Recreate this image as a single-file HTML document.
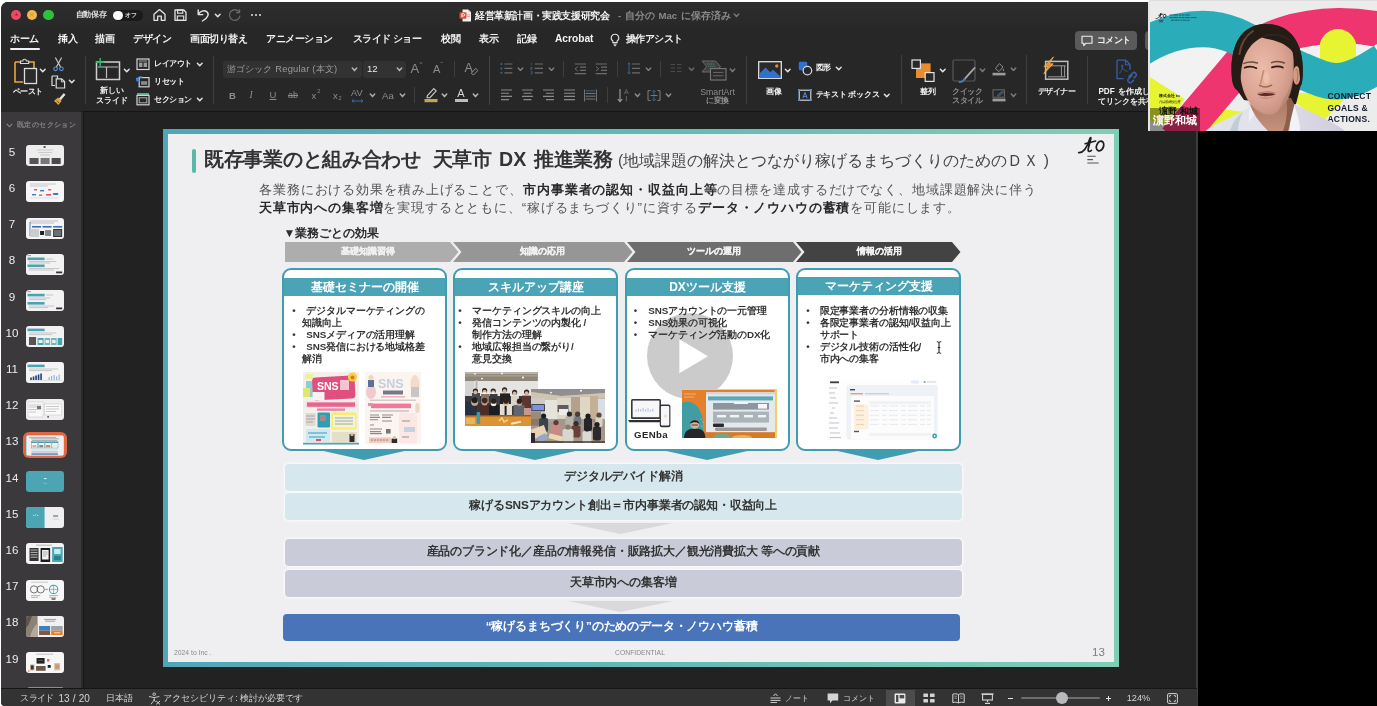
<!DOCTYPE html>
<html lang="ja">
<head>
<meta charset="utf-8">
<title>PowerPoint</title>
<style>
*{margin:0;padding:0;box-sizing:border-box;}
html,body{width:1377px;height:706px;overflow:hidden;background:#fff;}
body{font-family:"Liberation Sans",sans-serif;position:relative;color:#fff;}
.abs{position:absolute;}
.t{position:absolute;white-space:nowrap;line-height:1;z-index:2;}
.b{font-weight:bold;}
#win{position:absolute;left:1px;top:2px;width:1196px;height:704px;background:#272727;border-radius:7px 0 0 4px;overflow:hidden;}
#black{position:absolute;left:1197px;top:0;width:180px;height:706px;background:#000;}
/* inside #win coordinates are offset by (-1,-2); use #root for page coords */
#root{position:absolute;left:0;top:0;width:1377px;height:706px;will-change:transform;}
.sep{position:absolute;width:1px;background:#3e3e3e;}
.chev{position:absolute;width:6px;height:4px;}
.dim{color:#8e8e90;}
/*SIDEBAR*/
#side{position:absolute;left:1px;top:112px;width:79.5px;height:576px;background:#3b393c;}
.num{position:absolute;left:0;width:24px;text-align:center;font-size:11px;color:#ececec;line-height:1;}
.th{position:absolute;left:26px;width:38px;height:21px;background:#f3f3f4;border-radius:3px;overflow:hidden;}
/*SLIDE*/
#slide{position:absolute;left:163px;top:129px;width:956px;height:538px;background:linear-gradient(90deg,#4fa6b6 0%,#62b9b6 50%,#7fceb6 100%);}
#sin{position:absolute;left:5px;top:5px;right:5px;bottom:5px;background:#efeef0;}
.k{color:#333;}
</style>
</head>
<body>
<div id="root">
<div id="black"></div>
<div id="win"><div style="position:absolute;left:0;top:0;width:100%;height:27px;background:linear-gradient(#2d2d2d,#2a2a2a 70%,#272727);"></div></div>

<!--CHROME-->
<div class="abs" style="left:10.8px;top:9.5px;width:10.6px;height:10.6px;border-radius:50%;background:#ec4a63;"></div><div class="abs" style="left:26.8px;top:9.5px;width:10.6px;height:10.6px;border-radius:50%;background:#f5b650;"></div><div class="abs" style="left:43.1px;top:9.5px;width:10.6px;height:10.6px;border-radius:50%;background:#2bc23f;"></div><svg class="abs" style="left:13.6px;top:12.4px;" width="5" height="5" viewBox="0 0 5 5"><polygon points="2.5,0.9 4.1,3.6 0.9,3.6" fill="#9a1d3f"/></svg><svg class="abs" style="left:29.4px;top:12.2px;" width="5.4" height="5.4" viewBox="0 0 5.4 5.4"><path d="M1 1 L4.4 4.4 M4.4 1 L1 4.4" stroke="#d8741c" stroke-width="0.9" stroke-dasharray="0.9 0.5"/></svg><div class="t b" style="left:75.6px;top:11.1px;font-size:7.8px;color:#e0e0e0;letter-spacing:-0.2px;">自動保存</div><div class="abs" style="left:112.5px;top:9.8px;width:30px;height:10.8px;border-radius:5.4px;background:#1a1a1c;"></div><div class="abs" style="left:113.3px;top:10.5px;width:9.4px;height:9.4px;border-radius:50%;background:#fafafa;"></div><div class="t b" style="left:125px;top:12.2px;font-size:6.2px;color:#d8d8d8;">オフ</div><svg class="abs" style="left:152px;top:8px;" width="15" height="14" viewBox="0 0 15 14"><path d="M2 6.2 L7.5 1.6 L13 6.2 V12.3 H9.3 V8.2 H5.7 V12.3 H2 Z" fill="none" stroke="#e4e4e4" stroke-width="1.3" stroke-linejoin="round"/></svg><svg class="abs" style="left:173px;top:8px;" width="15" height="14" viewBox="0 0 15 14"><path d="M2 2 H10.8 L13 4.2 V12.3 H2 Z" fill="none" stroke="#e4e4e4" stroke-width="1.3" stroke-linejoin="round"/><rect x="4.6" y="2" width="5.2" height="3.2" fill="none" stroke="#e4e4e4" stroke-width="1.1"/><rect x="4.3" y="8" width="6.4" height="4.3" fill="none" stroke="#e4e4e4" stroke-width="1.1"/></svg><svg class="abs" style="left:196px;top:8px;" width="15" height="15" viewBox="0 0 15 15"><path d="M2.2 2 V6.6 H6.8" fill="none" stroke="#e4e4e4" stroke-width="1.4" stroke-linecap="round" stroke-linejoin="round"/><path d="M2.6 6.3 C4 3.2 8 1.8 10.6 3.6 C13.4 5.6 12.6 9.4 6.4 13" fill="none" stroke="#e4e4e4" stroke-width="1.4" stroke-linecap="round"/></svg><svg class="abs" style="left:213.75px;top:12.7px;" width="7.5" height="5" viewBox="-1 -1 7.5 5"><polyline points="0.4,0.2 2.75,2.8 5.1,0.2" fill="none" stroke="#e0e0e0" stroke-width="1.5" stroke-linecap="round" stroke-linejoin="round"/></svg><svg class="abs" style="left:227px;top:8px;" width="15" height="15" viewBox="0 0 15 15"><path d="M12.2 4.2 A5.3 5.3 0 1 0 12.9 8.2" fill="none" stroke="#666668" stroke-width="1.3" stroke-linecap="round"/><path d="M12.6 1.6 V4.6 H9.6" fill="none" stroke="#666668" stroke-width="1.3" stroke-linecap="round" stroke-linejoin="round"/></svg><div class="abs" style="left:251px;top:14.3px;width:2px;height:2px;border-radius:50%;background:#e0e0e0;"></div><div class="abs" style="left:255px;top:14.3px;width:2px;height:2px;border-radius:50%;background:#e0e0e0;"></div><div class="abs" style="left:259px;top:14.3px;width:2px;height:2px;border-radius:50%;background:#e0e0e0;"></div><svg class="abs" style="left:459px;top:8.5px;" width="13" height="13" viewBox="0 0 13 13"><path d="M3.5 0.5 H9.2 L12 3.3 V12.5 H3.5 Z" fill="#f4f0ee"/><path d="M9.2 0.5 V3.3 H12 Z" fill="#d6cfcc"/><rect x="0.5" y="3.2" width="7" height="6.6" rx="1" fill="#d4513a"/><path d="M2.9 8.3 V4.7 H4.5 A1.15 1.15 0 0 1 4.5 7 H2.9" fill="none" stroke="#fff" stroke-width="0.9"/><rect x="8.3" y="5.4" width="2.6" height="0.9" fill="#e08a7a"/><rect x="8.3" y="7.2" width="2.6" height="0.9" fill="#e08a7a"/></svg><div class="t b" style="left:475px;top:10.7px;font-size:9.6px;color:#f4f4f4;letter-spacing:-0.4px;">経営革新計画・実践支援研究会</div><div class="t b" style="left:618px;top:10.7px;font-size:9.6px;color:#8a8a8c;word-spacing:1px;">- 自分の Mac に保存済み</div><svg class="abs" style="left:732.5px;top:13.2px;" width="7" height="4.8" viewBox="-1 -1 7 4.8"><polyline points="0.3,0.1 2.5,2.6 4.7,0.1" fill="none" stroke="#77777a" stroke-width="1.5" stroke-linecap="round" stroke-linejoin="round"/></svg><div class="t b" style="left:10px;top:34.4px;font-size:9.6px;color:#f2f2f2;letter-spacing:-0.45px;">ホーム</div><div class="t b" style="left:58px;top:34.4px;font-size:9.6px;color:#f2f2f2;letter-spacing:-0.45px;">挿入</div><div class="t b" style="left:95.4px;top:34.4px;font-size:9.6px;color:#f2f2f2;letter-spacing:-0.45px;">描画</div><div class="t b" style="left:133px;top:34.4px;font-size:9.6px;color:#f2f2f2;letter-spacing:-0.45px;">デザイン</div><div class="t b" style="left:190px;top:34.4px;font-size:9.6px;color:#f2f2f2;letter-spacing:-0.45px;">画面切り替え</div><div class="t b" style="left:266px;top:34.4px;font-size:9.6px;color:#f2f2f2;letter-spacing:-0.45px;">アニメーション</div><div class="t b" style="left:352.5px;top:34.4px;font-size:9.6px;color:#f2f2f2;letter-spacing:-0.45px;">スライド ショー</div><div class="t b" style="left:441px;top:34.4px;font-size:9.6px;color:#f2f2f2;letter-spacing:-0.45px;">校閲</div><div class="t b" style="left:479px;top:34.4px;font-size:9.6px;color:#f2f2f2;letter-spacing:-0.45px;">表示</div><div class="t b" style="left:517px;top:34.4px;font-size:9.6px;color:#f2f2f2;letter-spacing:-0.45px;">記録</div><div class="t b" style="left:555px;top:34.1px;font-size:10.2px;color:#f2f2f2;">Acrobat</div><svg class="abs" style="left:608.5px;top:32.5px;" width="12" height="14" viewBox="0 0 12 14"><path d="M6 1.2 A3.7 3.7 0 0 0 3.9 8 V9.6 H8.1 V8 A3.7 3.7 0 0 0 6 1.2 Z" fill="none" stroke="#e0e0e0" stroke-width="1.1"/><path d="M4.4 11.2 H7.6 M4.9 12.7 H7.1" stroke="#e0e0e0" stroke-width="1"/></svg><div class="t b" style="left:625.5px;top:34.4px;font-size:9.6px;color:#f2f2f2;letter-spacing:-0.45px;">操作アシスト</div><div class="abs" style="left:10px;top:47.8px;width:29.6px;height:2.5px;border-radius:1.3px;background:#f2f2f2;"></div><div class="abs" style="left:1075px;top:31px;width:62px;height:19.2px;border-radius:4px;background:#5a5a5a;"></div><svg class="abs" style="left:1081px;top:34.5px;" width="12" height="12" viewBox="0 0 12 12"><path d="M1 1.2 H11 V8.2 H5 L2.8 10.6 V8.2 H1 Z" fill="none" stroke="#f0f0f0" stroke-width="1.1" stroke-linejoin="round"/></svg><div class="t b" style="left:1096.7px;top:36.1px;font-size:8.6px;color:#f4f4f4;letter-spacing:-0.5px;">コメント</div><div class="abs" style="left:1145.3px;top:31px;width:40px;height:19.2px;border-radius:4px;background:#5a5a5a;"></div>
<!--RIBBON-->
<svg class="abs" style="left:13px;top:57px;" width="26" height="28" viewBox="0 0 26 28"><path d="M2 5 H8 M16 5 H21 V11" fill="none" stroke="#e9a540" stroke-width="1.6"/><path d="M2 5 V25 H10" fill="none" stroke="#e9a540" stroke-width="1.6"/><path d="M7.5 6.5 V4 H9.8 A1.8 1.8 0 0 1 13.4 4 H15.7 V6.5 Z" fill="none" stroke="#d8d8d8" stroke-width="1.1"/><rect x="11.5" y="11.5" width="12" height="15" fill="#2b2b2d" stroke="#dcdcdc" stroke-width="1.3"/></svg><svg class="abs" style="left:38.75px;top:68.0px;" width="7.5" height="5" viewBox="-1 -1 7.5 5"><polyline points="0.4,0.2 2.75,2.8 5.1,0.2" fill="none" stroke="#e0e0e0" stroke-width="1.5" stroke-linecap="round" stroke-linejoin="round"/></svg><div class="t b" style="left:2.5px;width:50px;text-align:center;top:87.9px;font-size:8px;color:#f2f2f2;letter-spacing:-0.5px;">ペースト</div><svg class="abs" style="left:52px;top:57px;" width="13" height="15" viewBox="0 0 13 15"><path d="M3.6 1 L8.6 10 M9.4 1 L4.4 10" stroke="#c8c8c8" stroke-width="1.2" stroke-linecap="round"/><circle cx="3.6" cy="11.8" r="1.8" fill="none" stroke="#4a8fe0" stroke-width="1.2"/><circle cx="9.4" cy="11.8" r="1.8" fill="none" stroke="#4a8fe0" stroke-width="1.2"/></svg><svg class="abs" style="left:50.5px;top:74.5px;" width="16" height="14" viewBox="0 0 16 14"><path d="M1 1 H6.5 V3.5 M1 1 V10.5 H4" fill="none" stroke="#dcdcdc" stroke-width="1.2"/><path d="M5.2 3.8 H10.6 L13.6 6.6 V13 H5.2 Z" fill="none" stroke="#dcdcdc" stroke-width="1.2"/><path d="M10.4 4 V6.8 H13.4" fill="none" stroke="#dcdcdc" stroke-width="1"/></svg><svg class="abs" style="left:68.25px;top:79.0px;" width="7.5" height="5" viewBox="-1 -1 7.5 5"><polyline points="0.4,0.2 2.75,2.8 5.1,0.2" fill="none" stroke="#e0e0e0" stroke-width="1.5" stroke-linecap="round" stroke-linejoin="round"/></svg><svg class="abs" style="left:52px;top:92px;" width="14" height="14" viewBox="0 0 14 14"><path d="M7.2 6.8 L11.8 1.6 L13 2.8 L8.6 8" fill="#e8e8e8" stroke="#e8e8e8" stroke-width="0.8"/><path d="M2 9 L6 5.4 L9.6 9 L6.2 13 Z" fill="#eaa63f"/><path d="M3.2 10 L5.4 12.4 M4.8 8.6 L7 11" stroke="#2a2a2c" stroke-width="0.7"/></svg><div class="sep" style="left:85px;top:56px;height:48px;background:#3e3e3e;"></div><svg class="abs" style="left:94px;top:57px;" width="28" height="25" viewBox="0 0 28 25"><rect x="2.5" y="5" width="23" height="17.5" fill="none" stroke="#cfcfcf" stroke-width="1.5"/><path d="M4 10 H24 M12.5 10 V21" stroke="#bdbdbd" stroke-width="1.2"/><path d="M6.2 1 V9.4 M2 5.2 H10.4" stroke="#37b26a" stroke-width="1.5"/></svg><svg class="abs" style="left:123.25px;top:68.0px;" width="7.5" height="5" viewBox="-1 -1 7.5 5"><polyline points="0.4,0.2 2.75,2.8 5.1,0.2" fill="none" stroke="#e0e0e0" stroke-width="1.5" stroke-linecap="round" stroke-linejoin="round"/></svg><div class="t b" style="left:86.5px;width:50px;text-align:center;top:87.4px;font-size:8px;color:#f2f2f2;">新しい</div><div class="t b" style="left:86.5px;width:50px;text-align:center;top:97.2px;font-size:8px;color:#f2f2f2;">スライド</div><svg class="abs" style="left:135.5px;top:57.5px;" width="14" height="13" viewBox="0 0 14 13"><rect x="1" y="1" width="12" height="10.5" fill="none" stroke="#d4d4d4" stroke-width="1.2"/><rect x="3" y="4.6" width="3.4" height="4.4" fill="#9a9a9a"/><rect x="7.6" y="4.6" width="3.4" height="4.4" fill="#9a9a9a"/><rect x="3" y="2.5" width="8" height="1" fill="#9a9a9a"/></svg><div class="t b" style="left:154px;top:60.2px;font-size:8px;color:#f2f2f2;letter-spacing:-0.5px;">レイアウト</div><svg class="abs" style="left:196.25px;top:62.0px;" width="7.5" height="5" viewBox="-1 -1 7.5 5"><polyline points="0.4,0.2 2.75,2.8 5.1,0.2" fill="none" stroke="#e0e0e0" stroke-width="1.5" stroke-linecap="round" stroke-linejoin="round"/></svg><svg class="abs" style="left:135.5px;top:74.5px;" width="14" height="13" viewBox="0 0 14 13"><rect x="3.2" y="2.6" width="9.8" height="9.2" fill="none" stroke="#d4d4d4" stroke-width="1.2"/><rect x="5" y="6.2" width="6.2" height="3.6" fill="#8a8a8a"/><path d="M1 5.6 A3.6 3.6 0 0 1 6.4 2.4" fill="none" stroke="#3f8fe6" stroke-width="1.3"/><path d="M0.4 2.8 L1.1 5.9 L4 5.2" fill="none" stroke="#3f8fe6" stroke-width="1.1"/></svg><div class="t b" style="left:154px;top:77.8px;font-size:8px;color:#f2f2f2;letter-spacing:-0.5px;">リセット</div><svg class="abs" style="left:135.5px;top:92px;" width="14" height="14" viewBox="0 0 14 14"><rect x="1" y="1" width="12" height="2.4" fill="#4fae86"/><rect x="1" y="3.4" width="12" height="9.4" fill="none" stroke="#d4d4d4" stroke-width="1.2"/><rect x="3.2" y="5.8" width="7.6" height="5" fill="none" stroke="#b0b0b0" stroke-width="1"/></svg><div class="t b" style="left:154px;top:95.5px;font-size:8px;color:#f2f2f2;letter-spacing:-0.5px;">セクション</div><svg class="abs" style="left:196.25px;top:97.1px;" width="7.5" height="5" viewBox="-1 -1 7.5 5"><polyline points="0.4,0.2 2.75,2.8 5.1,0.2" fill="none" stroke="#e0e0e0" stroke-width="1.5" stroke-linecap="round" stroke-linejoin="round"/></svg><div class="sep" style="left:213px;top:56px;height:48px;background:#3e3e3e;"></div><div class="abs" style="left:222.5px;top:60.5px;width:139px;height:17.5px;border-radius:3px;background:#323232;"></div><div class="abs" style="left:362.5px;top:60.5px;width:43px;height:17.5px;border-radius:3px;background:#323232;"></div><div class="t" style="left:226.5px;top:64.3px;font-size:9.4px;color:#9a9a9c;letter-spacing:0.2px;">游ゴシック Regular (本文)</div><svg class="abs" style="left:351.0px;top:67.1px;" width="7" height="4.8" viewBox="-1 -1 7 4.8"><polyline points="0.3,0.1 2.5,2.6 4.7,0.1" fill="none" stroke="#b4b4b4" stroke-width="1.5" stroke-linecap="round" stroke-linejoin="round"/></svg><div class="t" style="left:367px;top:64.2px;font-size:9.6px;color:#e8e8e8;">12</div><svg class="abs" style="left:396.0px;top:67.1px;" width="7" height="4.8" viewBox="-1 -1 7 4.8"><polyline points="0.3,0.1 2.5,2.6 4.7,0.1" fill="none" stroke="#b4b4b4" stroke-width="1.5" stroke-linecap="round" stroke-linejoin="round"/></svg><div class="t" style="left:410.5px;top:62.0px;font-size:13px;color:#8c8c8f;">A</div><div class="t" style="left:419.5px;top:60.5px;font-size:6px;color:#8c8c8f;">^</div><div class="t" style="left:433px;top:63.8px;font-size:11px;color:#8c8c8f;">A</div><div class="t" style="left:440.5px;top:60.5px;font-size:7px;color:#8c8c8f;">ˇ</div><div class="sep" style="left:454px;top:61px;height:16px;background:#3e3e3e;"></div><div class="t" style="left:464.5px;top:62.2px;font-size:12.5px;color:#8c8c8f;">A</div><svg class="abs" style="left:470px;top:67px;" width="9" height="9" viewBox="0 0 9 9"><path d="M1.2 6.4 L5.6 1.4 L7.8 3.4 L3.6 8 Z" fill="none" stroke="#8c8c8f" stroke-width="1"/></svg><div class="t b" style="left:229px;top:90.5px;font-size:9.5px;color:#8c8c8f;">B</div><div class="t" style="left:249.5px;top:90.5px;font-size:9.5px;color:#8c8c8f;font-style:italic;font-family:'Liberation Serif',serif;">I</div><div class="t" style="left:269.5px;top:90.2px;font-size:9.5px;color:#8c8c8f;text-decoration:underline;">U</div><div class="t" style="left:288px;top:90.7px;font-size:9px;color:#8c8c8f;text-decoration:line-through;">ab</div><div class="t" style="left:311.5px;top:91.0px;font-size:9.5px;color:#8c8c8f;">x</div><div class="t" style="left:317.2px;top:89.0px;font-size:5.5px;color:#8c8c8f;">2</div><div class="t" style="left:333px;top:90.5px;font-size:9.5px;color:#8c8c8f;">x</div><div class="t" style="left:338.6px;top:96.0px;font-size:5.5px;color:#8c8c8f;">2</div><div class="t" style="left:351px;top:88.8px;font-size:9.2px;color:#8c8c8f;">AV</div><svg class="abs" style="left:351px;top:98.8px;" width="13" height="4" viewBox="0 0 13 4"><path d="M1 2 H12 M2.8 0.4 L1 2 L2.8 3.6 M10.2 0.4 L12 2 L10.2 3.6" fill="none" stroke="#3d6fb0" stroke-width="0.9"/></svg><svg class="abs" style="left:368.5px;top:93.19999999999999px;" width="7" height="4.8" viewBox="-1 -1 7 4.8"><polyline points="0.3,0.1 2.5,2.6 4.7,0.1" fill="none" stroke="#a8a8a8" stroke-width="1.5" stroke-linecap="round" stroke-linejoin="round"/></svg><div class="t" style="left:382px;top:90.6px;font-size:9.6px;color:#8c8c8f;">Aa</div><svg class="abs" style="left:399.0px;top:93.19999999999999px;" width="7" height="4.8" viewBox="-1 -1 7 4.8"><polyline points="0.3,0.1 2.5,2.6 4.7,0.1" fill="none" stroke="#a8a8a8" stroke-width="1.5" stroke-linecap="round" stroke-linejoin="round"/></svg><div class="sep" style="left:414px;top:87px;height:16px;background:#3e3e3e;"></div><svg class="abs" style="left:424px;top:87px;" width="14" height="16" viewBox="0 0 14 16"><path d="M3.4 8.6 L9.8 1.6 L12.2 3.8 L6 10.6 L3 10.8 Z" fill="none" stroke="#cfcfcf" stroke-width="1.1" stroke-linejoin="round"/><rect x="0.5" y="12" width="13" height="3.2" fill="#bda655"/></svg><svg class="abs" style="left:441.0px;top:93.19999999999999px;" width="7" height="4.8" viewBox="-1 -1 7 4.8"><polyline points="0.3,0.1 2.5,2.6 4.7,0.1" fill="none" stroke="#b8b8b8" stroke-width="1.5" stroke-linecap="round" stroke-linejoin="round"/></svg><div class="t" style="left:457.3px;top:87.7px;font-size:11px;color:#d4d4d4;">A</div><div class="abs" style="left:454.5px;top:99.2px;width:13px;height:3.2px;background:#bdbdbd;"></div><svg class="abs" style="left:471.5px;top:93.19999999999999px;" width="7" height="4.8" viewBox="-1 -1 7 4.8"><polyline points="0.3,0.1 2.5,2.6 4.7,0.1" fill="none" stroke="#b8b8b8" stroke-width="1.5" stroke-linecap="round" stroke-linejoin="round"/></svg><div class="sep" style="left:488.5px;top:55.5px;height:49.5px;background:#444444;"></div><svg class="abs" style="left:500px;top:62px;" width="13" height="13" viewBox="0 0 13 13"><circle cx="1.4" cy="2" r="1" fill="#3d6696"/><circle cx="1.4" cy="6.4" r="1" fill="#3d6696"/><circle cx="1.4" cy="10.8" r="1" fill="#3d6696"/><path d="M4.4 2 H12.4 M4.4 6.4 H12.4 M4.4 10.8 H12.4" stroke="#6c6c6f" stroke-width="1.2"/></svg><svg class="abs" style="left:517.2px;top:66.6px;" width="7" height="4.8" viewBox="-1 -1 7 4.8"><polyline points="0.3,0.1 2.5,2.6 4.7,0.1" fill="none" stroke="#7a7a7c" stroke-width="1.5" stroke-linecap="round" stroke-linejoin="round"/></svg><svg class="abs" style="left:530px;top:62px;" width="14" height="13" viewBox="0 0 14 13"><path d="M4.8 2 H13 M4.8 6.4 H13 M4.8 10.8 H13" stroke="#6c6c6f" stroke-width="1.2"/><path d="M1.4 0.8 V3.2 M0.6 5.4 H2.2 V6.4 H0.6 V7.6 H2.2 M0.6 9.6 H2.2 V12 H0.6 M0.8 10.8 H2.2" fill="none" stroke="#3d6696" stroke-width="0.7"/></svg><svg class="abs" style="left:547.5px;top:66.6px;" width="7" height="4.8" viewBox="-1 -1 7 4.8"><polyline points="0.3,0.1 2.5,2.6 4.7,0.1" fill="none" stroke="#7a7a7c" stroke-width="1.5" stroke-linecap="round" stroke-linejoin="round"/></svg><div class="sep" style="left:563px;top:61px;height:16px;background:#3e3e3e;"></div><svg class="abs" style="left:574px;top:62.5px;" width="13" height="12" viewBox="0 0 13 12"><path d="M0.6 1 H12 M6 4.2 H12 M6 7.4 H12 M0.6 10.6 H12" stroke="#6c6c6f" stroke-width="1.2"/><path d="M3.8 3.6 L1 5.8 L3.8 8" fill="none" stroke="#6c6c6f" stroke-width="1"/></svg><svg class="abs" style="left:594.5px;top:62.5px;" width="13" height="12" viewBox="0 0 13 12"><path d="M0.6 1 H12 M6 4.2 H12 M6 7.4 H12 M0.6 10.6 H12" stroke="#6c6c6f" stroke-width="1.2"/><path d="M1 3.6 L3.8 5.8 L1 8" fill="none" stroke="#6c6c6f" stroke-width="1"/></svg><div class="sep" style="left:616.5px;top:61px;height:16px;background:#3e3e3e;"></div><svg class="abs" style="left:627px;top:62px;" width="14" height="13" viewBox="0 0 14 13"><path d="M5 2 H13 M5 6.4 H13 M5 10.8 H13" stroke="#6c6c6f" stroke-width="1.2"/><path d="M2 0.8 V12 M0.6 2.4 L2 0.8 L3.4 2.4 M0.6 10.4 L2 12 L3.4 10.4" fill="none" stroke="#3d6696" stroke-width="0.9"/></svg><svg class="abs" style="left:644.5px;top:66.6px;" width="7" height="4.8" viewBox="-1 -1 7 4.8"><polyline points="0.3,0.1 2.5,2.6 4.7,0.1" fill="none" stroke="#7a7a7c" stroke-width="1.5" stroke-linecap="round" stroke-linejoin="round"/></svg><div class="sep" style="left:659.5px;top:61px;height:16px;background:#3e3e3e;"></div><svg class="abs" style="left:670px;top:63px;" width="12" height="11" viewBox="0 0 12 11"><path d="M0.5 1.5 H5 M0.5 5 H5 M0.5 8.5 H5 M7 1.5 H11.5 M7 5 H11.5 M7 8.5 H11.5" stroke="#4a4a52" stroke-width="1.2"/></svg><svg class="abs" style="left:687.5px;top:66.6px;" width="7" height="4.8" viewBox="-1 -1 7 4.8"><polyline points="0.3,0.1 2.5,2.6 4.7,0.1" fill="none" stroke="#68686a" stroke-width="1.5" stroke-linecap="round" stroke-linejoin="round"/></svg><svg class="abs" style="left:501px;top:89px;" width="12" height="12" viewBox="0 0 12 12"><path d="M0 1 H11 M0 4.2 H8 M0 7.4 H11 M0 10.6 H8" stroke="#8a8a8c" stroke-width="1.1"/></svg><svg class="abs" style="left:522px;top:89px;" width="12" height="12" viewBox="0 0 12 12"><path d="M0 1 H11 M1.5 4.2 H9.5 M0 7.4 H11 M1.5 10.6 H9.5" stroke="#8a8a8c" stroke-width="1.1"/></svg><svg class="abs" style="left:543px;top:89px;" width="12" height="12" viewBox="0 0 12 12"><path d="M0 1 H11 M3 4.2 H11 M0 7.4 H11 M3 10.6 H11" stroke="#8a8a8c" stroke-width="1.1"/></svg><svg class="abs" style="left:563.5px;top:89px;" width="12" height="12" viewBox="0 0 12 12"><path d="M0 1 H11 M0 4.2 H11 M0 7.4 H11 M0 10.6 H11" stroke="#8a8a8c" stroke-width="1.1"/></svg><svg class="abs" style="left:583.5px;top:88.5px;" width="13" height="13" viewBox="0 0 13 13"><path d="M1.5 4.4 H11.5 M1.5 7.2 H11.5 M1.5 10 H11.5" stroke="#7a7a7c" stroke-width="1"/><path d="M0.5 0.5 V12.5 M12.5 0.5 V12.5" stroke="#7a7a7c" stroke-width="0.9"/><path d="M1.6 1.8 H11.4" stroke="#3d6696" stroke-width="0.9"/></svg><div class="sep" style="left:606.5px;top:87px;height:16px;background:#3e3e3e;"></div><svg class="abs" style="left:617px;top:88px;" width="13" height="15" viewBox="0 0 13 15"><path d="M3 1 V13.4 M0.8 11 L3 13.6 L5.2 11" fill="none" stroke="#a0a0a2" stroke-width="1.1"/><path d="M7.4 6 L9.4 1.4 L11.4 6 M8 4.6 H10.8" fill="none" stroke="#6a6a6c" stroke-width="0.8"/><path d="M9.4 8 V13.4" stroke="#6a6a6c" stroke-width="0.9"/></svg><svg class="abs" style="left:633.5px;top:93.19999999999999px;" width="7" height="4.8" viewBox="-1 -1 7 4.8"><polyline points="0.3,0.1 2.5,2.6 4.7,0.1" fill="none" stroke="#8a8a8c" stroke-width="1.5" stroke-linecap="round" stroke-linejoin="round"/></svg><svg class="abs" style="left:646.5px;top:88.5px;" width="14" height="13" viewBox="0 0 14 13"><path d="M3.6 1.6 H1 V11.4 H3.6 M10.4 1.6 H13 V11.4 H10.4" fill="none" stroke="#7a8088" stroke-width="1"/><path d="M7 1.4 V11.6 M5.4 3 L7 1.2 L8.6 3 M5.4 10 L7 11.8 L8.6 10" fill="none" stroke="#3d6696" stroke-width="0.9"/><path d="M3.6 6.5 H10.4" stroke="#7a8088" stroke-width="0.9"/></svg><svg class="abs" style="left:664.5px;top:93.19999999999999px;" width="7" height="4.8" viewBox="-1 -1 7 4.8"><polyline points="0.3,0.1 2.5,2.6 4.7,0.1" fill="none" stroke="#8a8a8c" stroke-width="1.5" stroke-linecap="round" stroke-linejoin="round"/></svg><svg class="abs" style="left:700.5px;top:59.5px;" width="26" height="21" viewBox="0 0 26 21"><path d="M1 1 H14.5 L19.5 6.5 L14.5 12 H1 L5.6 6.5 Z" fill="#414143" stroke="#6a6a6c" stroke-width="1"/><path d="M6 4 H13 M7.4 6.4 H14.2" stroke="#3f7d57" stroke-width="1.3" stroke-dasharray="1.2 0.8"/><rect x="9.5" y="8.6" width="15.5" height="11.4" fill="#2b2b2d" stroke="#7a7a7c" stroke-width="1.1"/><path d="M12 12.4 H22.4 M12 15.8 H22.4" stroke="#6a6a6c" stroke-width="1"/></svg><svg class="abs" style="left:728.5px;top:68.1px;" width="7" height="4.8" viewBox="-1 -1 7 4.8"><polyline points="0.3,0.1 2.5,2.6 4.7,0.1" fill="none" stroke="#7a7a7c" stroke-width="1.5" stroke-linecap="round" stroke-linejoin="round"/></svg><div class="t" style="left:687.5px;width:60px;text-align:center;top:87.5px;font-size:8.8px;color:#8c8c8f;">SmartArt</div><div class="t b" style="left:687.5px;width:60px;text-align:center;top:97.4px;font-size:8px;color:#8c8c8f;letter-spacing:-0.5px;">に変換</div><div class="sep" style="left:746px;top:56px;height:48px;background:#3e3e3e;"></div><svg class="abs" style="left:757.5px;top:60.5px;" width="24" height="18" viewBox="0 0 24 18"><rect x="0.7" y="0.7" width="22.6" height="16.6" fill="#2a2a2c" stroke="#e0e0e0" stroke-width="1.3"/><path d="M1.4 16.6 V12.6 L7.6 6.6 L12.2 11.2 L15 8.8 L22.6 15.4 V16.6 Z" fill="#2f72cc"/><circle cx="18.8" cy="5" r="1.7" fill="#e8843c"/></svg><svg class="abs" style="left:784.25px;top:68.0px;" width="7.5" height="5" viewBox="-1 -1 7.5 5"><polyline points="0.4,0.2 2.75,2.8 5.1,0.2" fill="none" stroke="#e0e0e0" stroke-width="1.5" stroke-linecap="round" stroke-linejoin="round"/></svg><div class="t b" style="left:753.5px;width:40px;text-align:center;top:87.9px;font-size:8px;color:#f2f2f2;letter-spacing:-0.5px;">画像</div><svg class="abs" style="left:797.5px;top:60.5px;" width="15" height="15" viewBox="0 0 15 15"><rect x="0.8" y="0.8" width="8.4" height="8.4" rx="1.2" fill="#2f72cc"/><circle cx="9.4" cy="9.6" r="4.3" fill="#29292b" stroke="#d8d8d8" stroke-width="1.2"/></svg><div class="t b" style="left:815.7px;top:64.3px;font-size:8px;color:#f2f2f2;letter-spacing:-0.5px;">図形</div><svg class="abs" style="left:834.95px;top:66.3px;" width="7.5" height="5" viewBox="-1 -1 7.5 5"><polyline points="0.4,0.2 2.75,2.8 5.1,0.2" fill="none" stroke="#e0e0e0" stroke-width="1.5" stroke-linecap="round" stroke-linejoin="round"/></svg><svg class="abs" style="left:797.5px;top:88.5px;" width="14" height="12.5" viewBox="0 0 14 12.5"><rect x="1.2" y="1.2" width="11.6" height="10" fill="none" stroke="#e0e0e0" stroke-width="1.1"/><rect x="0" y="0" width="2.2" height="2.2" fill="#4a90e2"/><rect x="11.8" y="0" width="2.2" height="2.2" fill="#4a90e2"/><rect x="0" y="10.2" width="2.2" height="2.2" fill="#4a90e2"/><rect x="11.8" y="10.2" width="2.2" height="2.2" fill="#4a90e2"/><path d="M4.8 9.2 L7 3.4 L9.2 9.2 M5.6 7.4 H8.4" fill="none" stroke="#4a90e2" stroke-width="1"/></svg><div class="t b" style="left:815.7px;top:90.6px;font-size:8px;color:#f2f2f2;letter-spacing:-0.3px;">テキスト ボックス</div><svg class="abs" style="left:883.25px;top:92.5px;" width="7.5" height="5" viewBox="-1 -1 7.5 5"><polyline points="0.4,0.2 2.75,2.8 5.1,0.2" fill="none" stroke="#e0e0e0" stroke-width="1.5" stroke-linecap="round" stroke-linejoin="round"/></svg><div class="sep" style="left:900.5px;top:55px;height:49px;background:#3e3e3e;"></div><svg class="abs" style="left:910.5px;top:58.5px;" width="25" height="24" viewBox="0 0 25 24"><rect x="5" y="4.4" width="14.6" height="14.6" fill="#ea8b2d"/><rect x="1" y="1" width="8.4" height="8.4" fill="#29292b" stroke="#e4e4e4" stroke-width="1.2"/><rect x="14.2" y="13.6" width="8.8" height="8.8" fill="#29292b" stroke="#e4e4e4" stroke-width="1.2"/></svg><svg class="abs" style="left:938.75px;top:68.0px;" width="7.5" height="5" viewBox="-1 -1 7.5 5"><polyline points="0.4,0.2 2.75,2.8 5.1,0.2" fill="none" stroke="#e0e0e0" stroke-width="1.5" stroke-linecap="round" stroke-linejoin="round"/></svg><div class="t b" style="left:907.5px;width:40px;text-align:center;top:87.9px;font-size:8px;color:#f2f2f2;letter-spacing:-0.5px;">整列</div><svg class="abs" style="left:951.5px;top:58.5px;" width="26" height="25" viewBox="0 0 26 25"><rect x="1" y="1" width="22" height="21" rx="1.5" fill="none" stroke="#58585a" stroke-width="1.2"/><path d="M22.6 9 C19 13 15 17.4 12.4 20.4" stroke="#a8a8aa" stroke-width="1.8" stroke-linecap="round"/><path d="M12.4 20 C11 22.4 9.4 23.4 7.4 23" stroke="#4a78b8" stroke-width="1.8" stroke-linecap="round" fill="none"/></svg><svg class="abs" style="left:979.0px;top:68.1px;" width="7" height="4.8" viewBox="-1 -1 7 4.8"><polyline points="0.3,0.1 2.5,2.6 4.7,0.1" fill="none" stroke="#7a7a7c" stroke-width="1.5" stroke-linecap="round" stroke-linejoin="round"/></svg><div class="t b" style="left:942.0px;width:50px;text-align:center;top:87.9px;font-size:8px;color:#8c8c8f;letter-spacing:-0.5px;">クイック</div><div class="t b" style="left:942.0px;width:50px;text-align:center;top:97.4px;font-size:8px;color:#8c8c8f;letter-spacing:-0.5px;">スタイル</div><svg class="abs" style="left:991.5px;top:61.5px;" width="14" height="14" viewBox="0 0 14 14"><path d="M3.4 6.6 L7.4 1.6 L11 5 L7 9.6 Z" fill="none" stroke="#8a8a8c" stroke-width="1"/><path d="M11.4 6.6 C12.4 8 12.4 8.8 11.4 9.2 C10.4 8.8 10.4 8 11.4 6.6" fill="#8a8a8c"/><rect x="0.5" y="10.8" width="13" height="2.6" fill="#9c9c9e"/></svg><svg class="abs" style="left:1009.5px;top:66.6px;" width="7" height="4.8" viewBox="-1 -1 7 4.8"><polyline points="0.3,0.1 2.5,2.6 4.7,0.1" fill="none" stroke="#7a7a7c" stroke-width="1.5" stroke-linecap="round" stroke-linejoin="round"/></svg><svg class="abs" style="left:991.5px;top:88.5px;" width="14" height="13" viewBox="0 0 14 13"><rect x="1" y="0.8" width="11.4" height="7.4" fill="none" stroke="#6a6a6c" stroke-width="1"/><path d="M5 6.4 L10.4 1.8 L11.8 3.2 L6.6 7.6 Z" fill="#3e4a5c" stroke="#4c6488" stroke-width="0.7"/><rect x="0.5" y="9.6" width="13" height="2.8" fill="#9c9c9e"/></svg><svg class="abs" style="left:1009.5px;top:93.19999999999999px;" width="7" height="4.8" viewBox="-1 -1 7 4.8"><polyline points="0.3,0.1 2.5,2.6 4.7,0.1" fill="none" stroke="#7a7a7c" stroke-width="1.5" stroke-linecap="round" stroke-linejoin="round"/></svg><div class="sep" style="left:1026px;top:55px;height:49px;background:#3e3e3e;"></div><svg class="abs" style="left:1042px;top:56px;" width="28" height="25" viewBox="0 0 28 25"><rect x="3.6" y="5.4" width="22.2" height="17.8" fill="#272727" stroke="#bdbdbd" stroke-width="1.5"/><path d="M6 9.8 H23.6 M19.4 9.8 V20.6 M6 20.8 H23.6 M22.6 9.8 V20.6" fill="none" stroke="#9a9a9a" stroke-width="1"/><path d="M11.6 0.8 L2 10.6 H6 L1.8 17.8 L11.2 7.8 H7.2 Z" fill="#ee8a2a" stroke="#f7c766" stroke-width="0.7" stroke-linejoin="round"/></svg><div class="t b" style="left:1026.7px;width:60px;text-align:center;top:88.2px;font-size:8px;color:#f2f2f2;letter-spacing:-0.5px;">デザイナー</div><div class="sep" style="left:1086.5px;top:56px;height:48px;background:#3e3e3e;"></div><svg class="abs" style="left:1115px;top:59px;" width="23" height="25" viewBox="0 0 23 25"><path d="M2 1.2 H10.6 L15 5.6 V11 M2 1.2 V19.6 H8.6" fill="none" stroke="#3a5f9f" stroke-width="1.3"/><path d="M10.4 1.4 V5.8 H14.8" fill="none" stroke="#3a5f9f" stroke-width="1.1"/><path d="M4.4 14.4 C6.4 12.4 8 8.8 7.6 6.4 C7.4 5.4 6.4 5.6 6.6 7 C7 9.6 10 12 12.4 12.4" fill="none" stroke="#3a5f9f" stroke-width="0.9"/><path d="M14 17.6 L17.4 14.2 A2.2 2.2 0 0 1 20.6 17.4 L19 19 M17 16.4 L13.6 19.8 A2.2 2.2 0 0 0 16.8 23 L18.4 21.4" fill="none" stroke="#3a5f9f" stroke-width="1.5" stroke-linecap="round"/></svg><div class="t b" style="left:1098.4px;top:88.1px;font-size:8.2px;color:#f2f2f2;word-spacing:0.5px;">PDF を作成し</div><div class="t b" style="left:1097.7px;top:97.8px;font-size:8px;color:#f2f2f2;">てリンクを共有</div>
<!--CANVAS-->
<div class="abs" style="left:80px;top:111px;width:1117px;height:577px;background:#222222;"></div>
<div class="abs" style="left:80.5px;top:112px;width:2.6px;height:576px;background:#2a292b;"></div>
<div class="abs" style="left:83px;top:111px;width:1114px;height:1.2px;background:#151515;"></div><div class="abs" style="left:83px;top:111px;width:1px;height:577px;background:#161616;"></div>

<div class="abs" style="left:1196.4px;top:131px;width:1.2px;height:575px;background:#3c3c3c;"></div>
<!--SIDEBAR-->
<div id="side"></div>

<!--THUMBS-->
<svg class="abs" style="left:6px;top:122.5px;" width="7" height="5" viewBox="0 0 7 5"><polyline points="0.8,0.8 3.5,3.8 6.2,0.8" fill="none" stroke="#8a8a8c" stroke-width="1.1"/></svg><div class="t b" style="left:17px;top:121px;font-size:7.4px;color:#828285;letter-spacing:0.05px;letter-spacing:0.4px;">既定のセクション</div><div class="num" style="top:145.7px;font-size:11.6px;">5</div><svg class="abs" style="left:26.3px;top:145.2px;border-radius:3.2px;" width="38.2" height="21" viewBox="0 0 38 21" preserveAspectRatio="none"><rect width="38" height="21" fill="#ededee"/><path d="M11 5 H27 M12 7.5 H26 M14 10 H24" stroke="#bbb" stroke-width="0.7"/><rect x="3.5" y="13" width="9" height="6" fill="#555"/><rect x="14.5" y="13" width="9" height="6" fill="#777"/><rect x="25.5" y="13" width="9" height="6" fill="#4a4a4a"/><rect x="17.5" y="1.2" width="2" height="1.6" fill="#333"/></svg>
<div class="num" style="top:181.9px;font-size:11.6px;">6</div><svg class="abs" style="left:26.3px;top:181.4px;border-radius:3.2px;" width="38.2" height="21" viewBox="0 0 38 21" preserveAspectRatio="none"><rect width="38" height="21" fill="#f6f6f7"/><path d="M4 3 H30 M4 5 H22" stroke="#aab" stroke-width="0.6"/><rect x="8" y="8" width="3" height="1.4" fill="#d55"/><rect x="14" y="9" width="4" height="1.4" fill="#47b"/><rect x="22" y="8" width="3" height="1.4" fill="#d55"/><rect x="6" y="13" width="4" height="1.4" fill="#47b"/><rect x="13" y="13.5" width="3" height="1.4" fill="#d55"/><rect x="20" y="13" width="5" height="1.6" fill="#d55"/><rect x="27" y="12" width="5" height="2" fill="#47b"/><path d="M4 17 H33" stroke="#ccd" stroke-width="0.6"/></svg>
<div class="num" style="top:218.1px;font-size:11.6px;">7</div><svg class="abs" style="left:26.3px;top:217.6px;border-radius:3.2px;" width="38.2" height="21" viewBox="0 0 38 21" preserveAspectRatio="none"><rect width="38" height="21" fill="#f4f4f5"/><path d="M4 3 H32 M4 5 H28" stroke="#99a" stroke-width="0.6"/><path d="M4 4 V18" stroke="#36a" stroke-width="0.8"/><rect x="6" y="8" width="9" height="1.6" fill="#3a6fb5"/><rect x="16.5" y="8" width="9" height="1.6" fill="#3a6fb5"/><rect x="27" y="8" width="9" height="1.6" fill="#3a6fb5"/><rect x="4" y="11" width="9" height="8" fill="#ccc"/><rect x="14" y="13" width="4" height="4" fill="#222"/><rect x="19" y="12" width="6" height="6" fill="#888"/><rect x="27" y="11" width="9" height="8" fill="#333"/><path d="M28 13 H35 M28 15 H35 M28 17 H35" stroke="#ddd" stroke-width="0.7"/></svg>
<div class="num" style="top:254.3px;font-size:11.6px;">8</div><svg class="abs" style="left:26.3px;top:253.8px;border-radius:3.2px;" width="38.2" height="21" viewBox="0 0 38 21" preserveAspectRatio="none"><rect width="38" height="21" fill="#f2f2f3"/><rect x="1.5" y="3.5" width="17" height="2.6" fill="#4aa3b2"/><rect x="1.5" y="10.5" width="17" height="2.6" fill="#4aa3b2"/><path d="M3 7.5 H30 M3 9 H24 M3 14.5 H33 M3 16 H28 M20 5 H27" stroke="#aaa" stroke-width="0.6"/><rect x="30" y="17.5" width="6" height="1.8" fill="#333"/><path d="M1.5 1.6 H5" stroke="#666" stroke-width="0.6"/></svg>
<div class="num" style="top:290.5px;font-size:11.6px;">9</div><svg class="abs" style="left:26.3px;top:290.0px;border-radius:3.2px;" width="38.2" height="21" viewBox="0 0 38 21" preserveAspectRatio="none"><rect width="38" height="21" fill="#f2f2f3"/><rect x="1.5" y="3.8" width="17" height="2.6" fill="#4aa3b2"/><rect x="1.5" y="12" width="17" height="2.6" fill="#4aa3b2"/><path d="M3 8 H24 M3 9.6 H20 M3 16 H28 M3 17.6 H22 M20 5 H27" stroke="#aaa" stroke-width="0.6"/><rect x="30" y="17.5" width="6" height="1.8" fill="#333"/><path d="M1.5 1.6 H5" stroke="#666" stroke-width="0.6"/></svg>
<div class="num" style="top:326.7px;font-size:11.6px;">10</div><svg class="abs" style="left:26.3px;top:326.2px;border-radius:3.2px;" width="38.2" height="21" viewBox="0 0 38 21" preserveAspectRatio="none"><rect width="38" height="21" fill="#f2f2f3"/><rect x="1.5" y="2.6" width="17" height="2.6" fill="#4aa3b2"/><path d="M3 7 H30 M3 8.6 H26" stroke="#aaa" stroke-width="0.6"/><rect x="3" y="11" width="7" height="8" fill="#555"/><rect x="11.5" y="12" width="6" height="7" fill="#4aa3b2"/><rect x="18.5" y="12" width="5.5" height="7" fill="#6bb"/><rect x="25" y="12" width="5.5" height="7" fill="#6bb"/><rect x="31.5" y="12" width="4.5" height="7" fill="#4aa3b2"/><rect x="12.5" y="14" width="4" height="3" fill="#eee"/><rect x="19.5" y="14" width="3.5" height="3" fill="#eee"/><rect x="26" y="14" width="3.5" height="3" fill="#eee"/></svg>
<div class="num" style="top:362.9px;font-size:11.6px;">11</div><svg class="abs" style="left:26.3px;top:362.4px;border-radius:3.2px;" width="38.2" height="21" viewBox="0 0 38 21" preserveAspectRatio="none"><rect width="38" height="21" fill="#f4f4f5"/><rect x="1.5" y="2.6" width="17" height="2.6" fill="#4aa3b2"/><path d="M3 7 H32 M3 8.6 H26" stroke="#aaa" stroke-width="0.6"/><path d="M5 18 V15.5 M7.5 18 V14.5 M10 18 V13.5 M12.5 18 V12.5 M15 18 V11.5" stroke="#1f3f7a" stroke-width="1.6"/><path d="M23 18 V15 M25.5 18 V14 M28 18 V13 M30.5 18 V14.5 M33 18 V12.6" stroke="#6fa0d8" stroke-width="0.9"/><path d="M3 18.4 H36" stroke="#bbb" stroke-width="0.4"/></svg>
<div class="num" style="top:399.1px;font-size:11.6px;">12</div><svg class="abs" style="left:26.3px;top:398.6px;border-radius:3.2px;" width="38.2" height="21" viewBox="0 0 38 21" preserveAspectRatio="none"><rect width="38" height="21" fill="#eeeeef"/><rect x="2" y="3" width="15" height="15" fill="#f8f8f8" stroke="#bbb" stroke-width="0.4"/><rect x="18.5" y="5" width="17" height="11" fill="#fafafa" stroke="#bbb" stroke-width="0.4"/><path d="M3 6 H15 M3 8 H12 M3 10.5 H15 M3 13 H10 M20 7.5 H33 M20 10 H33 M20 12.5 H30" stroke="#999" stroke-width="0.5"/><rect x="11" y="7" width="4" height="3" fill="#777"/><circle cx="22" cy="17.8" r="0.9" fill="#444"/></svg>
<div class="abs" style="left:23.3px;top:432.1px;width:43.6px;height:26.4px;border-radius:6px;background:#e0673f;"></div><div class="num" style="top:435.3px;font-size:11.6px;">13</div><svg class="abs" style="left:26.3px;top:434.8px;border-radius:3.2px;" width="38.2" height="21" viewBox="0 0 38 21" preserveAspectRatio="none"><rect width="38" height="21" fill="#efeff1"/><rect width="38" height="21" fill="none" stroke="#5fb5b3" stroke-width="0.8"/><path d="M3 2.4 H30 M5 3.8 H33" stroke="#667" stroke-width="0.5"/><path d="M6 5.4 H31" stroke="#888" stroke-width="0.7"/><rect x="5.4" y="6.4" width="6" height="6.6" fill="#fff" stroke="#3f9db1" stroke-width="0.5"/><rect x="5.4" y="6.9" width="6" height="1.1" fill="#3f9db1"/><rect x="6.4" y="10" width="4" height="2.4" fill="#e8a0b4"/><rect x="12.2" y="6.4" width="6" height="6.6" fill="#fff" stroke="#3f9db1" stroke-width="0.5"/><rect x="12.2" y="6.9" width="6" height="1.1" fill="#3f9db1"/><rect x="13.2" y="10" width="4" height="2.4" fill="#8a8a8a"/><rect x="19" y="6.4" width="6" height="6.6" fill="#fff" stroke="#3f9db1" stroke-width="0.5"/><rect x="19" y="6.9" width="6" height="1.1" fill="#3f9db1"/><rect x="20" y="10" width="4" height="2.4" fill="#c98a4a"/><rect x="25.8" y="6.4" width="6" height="6.6" fill="#fff" stroke="#3f9db1" stroke-width="0.5"/><rect x="25.8" y="6.9" width="6" height="1.1" fill="#3f9db1"/><rect x="26.8" y="10" width="4" height="2.4" fill="#e8e8ee"/><rect x="5.4" y="13.8" width="26.4" height="1.9" fill="#d6e8ed"/><rect x="5.4" y="16" width="26.4" height="1.7" fill="#c9cbd9"/><rect x="5.4" y="18.4" width="26.4" height="1.3" fill="#4a74b9"/></svg>
<div class="num" style="top:471.5px;font-size:11.6px;">14</div><svg class="abs" style="left:26.3px;top:471.0px;border-radius:3.2px;" width="38.2" height="21" viewBox="0 0 38 21" preserveAspectRatio="none"><rect width="38" height="21" fill="#4ba5b3"/><path d="M18 7.6 H20.4" stroke="#fff" stroke-width="0.9"/><path d="M17.4 12.4 H18.6 M19.6 12.4 H20.8" stroke="#cfe8ec" stroke-width="0.5"/></svg>
<div class="num" style="top:507.7px;font-size:11.6px;">15</div><svg class="abs" style="left:26.3px;top:507.2px;border-radius:3.2px;" width="38.2" height="21" viewBox="0 0 38 21" preserveAspectRatio="none"><rect width="38" height="21" fill="#efeff1"/><rect width="18.5" height="21" fill="#4ba5b3"/><path d="M7 8.4 H8.2 M9 8 H10.2 M11 8.4 H12.2" stroke="#fff" stroke-width="0.7"/><path d="M27 9 H32" stroke="#445" stroke-width="0.9"/><path d="M26.5 12.2 H32.5" stroke="#bbb" stroke-width="0.5"/></svg>
<div class="num" style="top:543.9px;font-size:11.6px;">16</div><svg class="abs" style="left:26.3px;top:543.4px;border-radius:3.2px;" width="38.2" height="21" viewBox="0 0 38 21" preserveAspectRatio="none"><rect width="38" height="21" fill="#f4f4f5"/><path d="M10 2.2 H26" stroke="#888" stroke-width="0.6"/><rect x="3.5" y="5" width="9" height="13" fill="#333"/><path d="M4.5 7 H11.5 M4.5 9.4 H11.5 M4.5 11.8 H11.5 M4.5 14.2 H11.5" stroke="#ddd" stroke-width="0.8"/><rect x="14.5" y="5" width="9.5" height="14" fill="#1c1c1c"/><rect x="16" y="7" width="6.5" height="9.5" fill="#f4f4f4"/><path d="M17 9 H21.5 M17 11 H21.5 M17 13 H20" stroke="#777" stroke-width="0.6"/><rect x="26" y="4" width="10.5" height="15" fill="#4ba5b3"/><rect x="28" y="6" width="6.5" height="5" fill="#dff" opacity=".8"/><rect x="28" y="13" width="6.5" height="4" fill="#2a7f90"/></svg>
<div class="num" style="top:580.1px;font-size:11.6px;">17</div><svg class="abs" style="left:26.3px;top:579.6px;border-radius:3.2px;" width="38.2" height="21" viewBox="0 0 38 21" preserveAspectRatio="none"><rect width="38" height="21" fill="#f7f7f8"/><path d="M5 2.2 H22" stroke="#999" stroke-width="0.5"/><circle cx="8" cy="9.4" r="3.6" fill="none" stroke="#555" stroke-width="0.8"/><circle cx="14.6" cy="9.4" r="3.6" fill="none" stroke="#555" stroke-width="0.8"/><path d="M18.6 9.4 H22" stroke="#666" stroke-width="0.6"/><circle cx="27.5" cy="9.4" r="4.2" fill="none" stroke="#3fa2b0" stroke-width="1"/><path d="M27.5 5.2 V13.6 M23.3 9.4 H31.7" stroke="#3fa2b0" stroke-width="0.6"/><path d="M5 15.6 H14 M5 17.4 H12 M23 15.6 H32 M23 17.4 H30" stroke="#888" stroke-width="0.6"/><rect x="25.4" y="18.4" width="4" height="1.2" fill="#333"/></svg>
<div class="num" style="top:616.3px;font-size:11.6px;">18</div><svg class="abs" style="left:26.3px;top:615.8px;border-radius:3.2px;" width="38.2" height="21" viewBox="0 0 38 21" preserveAspectRatio="none"><rect width="38" height="21" fill="#f1f1f2"/><rect x="0" y="0" width="11.5" height="21" fill="#8c8175"/><path d="M0 0 H6 L2.5 9 L0 12 Z" fill="#5d564f"/><path d="M4 21 C6 13 9 9 11.5 8 V21 Z" fill="#b5a999"/><path d="M18 3.4 H30 M19 5.2 H29" stroke="#666" stroke-width="0.6"/><rect x="13" y="10" width="11" height="4.6" fill="#3f7fc0"/><rect x="13" y="14.6" width="11" height="4.4" fill="#7a5a40"/><rect x="25" y="10" width="11.5" height="4.6" fill="#9aa4ac"/><rect x="25" y="14.6" width="11.5" height="4.4" fill="#e0812c"/><path d="M28 16.8 H34" stroke="#fff" stroke-width="0.7"/></svg>
<div class="num" style="top:652.5px;font-size:11.6px;">19</div><svg class="abs" style="left:26.3px;top:652.0px;border-radius:3.2px;" width="38.2" height="21" viewBox="0 0 38 21" preserveAspectRatio="none"><rect width="38" height="21" fill="#f7f7f8"/><path d="M10 2.2 H27" stroke="#888" stroke-width="0.5"/><rect x="10.5" y="6" width="8" height="5.6" fill="#222"/><path d="M12.4 8.4 H16.6" stroke="#999" stroke-width="0.5"/><rect x="4" y="12.5" width="4.4" height="6" fill="#c8b59a"/><rect x="4.8" y="13.4" width="2.8" height="4" fill="#333"/><rect x="10" y="14" width="9.5" height="4.8" fill="#6d5b4a"/><rect x="21" y="7" width="2.2" height="2.6" fill="#d46a5a"/><rect x="21.6" y="13" width="3" height="2.8" fill="#222"/><rect x="28" y="11" width="6" height="7.4" fill="#d9c2a8"/><rect x="29" y="12.4" width="4" height="4.4" fill="#c29a74"/><path d="M2 19 H3.4" stroke="#c33" stroke-width="0.9"/></svg>

<!--SLIDE-->
<div id="slide"><div id="sin"></div></div>


<!--SLIDE CONTENT-->
<div class="abs" style="left:191.8px;top:149px;width:4.4px;height:24px;border-radius:2.2px;background:#5cb7a9;"></div>
<div class="t b k" style="left:204px;top:150px;font-size:19.6px;letter-spacing:0;letter-spacing:-0.3px;">既存事業のと組み合わせ</div>
<div class="t b k" style="left:433px;top:150px;font-size:19.6px;letter-spacing:-0.65px;">天草市</div>
<div class="t b k" style="left:499px;top:150px;font-size:19.6px;">DX</div>
<div class="t b k" style="left:534px;top:150px;font-size:19.6px;letter-spacing:-0.5px;">推進業務</div>
<div class="t" style="left:618px;top:153px;font-size:15.6px;color:#444;width:431px;text-align-last:justify;">(地域課題の解決とつながり稼げるまちづくりのためのＤＸ )</div>
<div class="t" style="left:259px;top:183.2px;width:777px;font-size:13.35px;color:#555;text-align-last:justify;">各業務における効果を積み上げることで、<b style="color:#2a2a2a">市内事業者の認知・収益向上等</b>の目標を達成するだけでなく、地域課題解決に伴う</div>
<div class="t" style="left:259px;top:201.2px;width:701px;font-size:13.35px;color:#555;text-align-last:justify;"><b style="color:#2a2a2a">天草市内への集客増</b>を実現するとともに、“稼げるまちづくり”に資する<b style="color:#2a2a2a">データ・ノウハウの蓄積</b>を可能にします。</div>
<div class="t b" style="left:283.5px;top:226.6px;font-size:12px;color:#2d2d2d;letter-spacing:-0.1px;">▼業務ごとの効果</div>
<!--chevrons-->
<svg class="abs" style="left:285px;top:241.7px;" width="680" height="20" viewBox="0 0 680 21" preserveAspectRatio="none">
<polygon points="0,0 165,0 173.5,10.5 165,21 0,21" fill="#adadad"/>
<polygon points="168,0 339,0 347.5,10.5 339,21 168,21 176.5,10.5" fill="#969696"/>
<polygon points="342,0 508,0 516.5,10.5 508,21 342,21 350.5,10.5" fill="#6e6e6e"/>
<polygon points="511,0 667,0 675.5,10.5 667,21 511,21 519.5,10.5" fill="#434343"/>
</svg>
<div class="t b" style="left:285px;top:247.4px;width:166px;text-align:center;font-size:8.8px;color:#f0f0f0;-webkit-text-stroke:0.3px #f0f0f0;">基礎知識習得</div>
<div class="t b" style="left:461px;top:247.4px;width:162px;text-align:center;font-size:8.8px;color:#f4f4f4;-webkit-text-stroke:0.3px #f0f0f0;">知識の応用</div>
<div class="t b" style="left:633px;top:247.4px;width:162px;text-align:center;font-size:8.8px;color:#f4f4f4;-webkit-text-stroke:0.3px #f0f0f0;">ツールの運用</div>
<div class="t b" style="left:798px;top:247.4px;width:162px;text-align:center;font-size:8.8px;color:#f4f4f4;-webkit-text-stroke:0.3px #f0f0f0;">情報の活用</div>
<svg class="abs" style="left:319px;top:449.4px;" width="90" height="13" viewBox="0 0 90 13"><polygon points="0,0 90,0 90,1 45,11 0,1" fill="#409db0"/></svg>
<div class="abs" style="left:282px;top:267.5px;width:165px;height:183px;border:2px solid #3f9db1;border-radius:9px;background:#fff;"></div>
<div class="abs" style="left:284px;top:278px;width:161px;height:18px;background:#4ba3b6;"></div>
<div class="t b" style="left:282px;top:280.5px;width:165px;text-align:center;font-size:12px;color:#fff;">基礎セミナーの開催</div>
<svg class="abs" style="left:490px;top:449.4px;" width="90" height="13" viewBox="0 0 90 13"><polygon points="0,0 90,0 90,1 45,11 0,1" fill="#409db0"/></svg>
<div class="abs" style="left:453px;top:267.5px;width:165px;height:183px;border:2px solid #3f9db1;border-radius:9px;background:#fff;"></div>
<div class="abs" style="left:455px;top:278px;width:161px;height:18px;background:#4ba3b6;"></div>
<div class="t b" style="left:453px;top:280.5px;width:165px;text-align:center;font-size:12px;color:#fff;">スキルアップ講座</div>
<svg class="abs" style="left:662px;top:449.4px;" width="90" height="13" viewBox="0 0 90 13"><polygon points="0,0 90,0 90,1 45,11 0,1" fill="#409db0"/></svg>
<div class="abs" style="left:625px;top:267.5px;width:165px;height:183px;border:2px solid #3f9db1;border-radius:9px;background:#fff;"></div>
<div class="abs" style="left:627px;top:278px;width:161px;height:18px;background:#4ba3b6;"></div>
<div class="t b" style="left:625px;top:280.5px;width:165px;text-align:center;font-size:12px;color:#fff;">DXツール支援</div>
<svg class="abs" style="left:833px;top:449.4px;" width="90" height="13" viewBox="0 0 90 13"><polygon points="0,0 90,0 90,1 45,11 0,1" fill="#409db0"/></svg>
<div class="abs" style="left:796px;top:267.5px;width:165px;height:183px;border:2px solid #3f9db1;border-radius:9px;background:#fff;"></div>
<div class="abs" style="left:798px;top:277px;width:161px;height:18px;background:#4ba3b6;"></div>
<div class="t b" style="left:796px;top:279.5px;width:165px;text-align:center;font-size:12px;color:#fff;">マーケティング支援</div>
<div class="t b k" style="left:292.3px;top:305.6px;font-size:9.8px;letter-spacing:-0.13px;">•</div><div class="t b k" style="left:306.3px;top:305.6px;font-size:9.8px;letter-spacing:-0.13px;">デジタルマーケティングの</div>
<div class="t b k" style="left:302px;top:318.0px;font-size:9.8px;letter-spacing:-0.13px;">知識向上</div>
<div class="t b k" style="left:292.3px;top:330.1px;font-size:9.8px;letter-spacing:-0.13px;">•</div><div class="t b k" style="left:306.3px;top:330.1px;font-size:9.8px;letter-spacing:-0.13px;">SNSメディアの活用理解</div>
<div class="t b k" style="left:292.3px;top:342.1px;font-size:9.8px;letter-spacing:-0.13px;">•</div><div class="t b k" style="left:306.3px;top:342.1px;font-size:9.8px;letter-spacing:-0.13px;">SNS発信における地域格差</div>
<div class="t b k" style="left:302px;top:354.40000000000003px;font-size:9.8px;letter-spacing:-0.13px;">解消</div>
<div class="t b k" style="left:458.3px;top:305.6px;font-size:9.8px;letter-spacing:-0.13px;">•</div><div class="t b k" style="left:472.3px;top:305.6px;font-size:9.8px;letter-spacing:-0.13px;">マーケティングスキルの向上</div>
<div class="t b k" style="left:458.3px;top:318.0px;font-size:9.8px;letter-spacing:-0.13px;">•</div><div class="t b k" style="left:472.3px;top:318.0px;font-size:9.8px;letter-spacing:-0.13px;">発信コンテンツの内製化 /</div>
<div class="t b k" style="left:472.3px;top:330.1px;font-size:9.8px;letter-spacing:-0.13px;">制作方法の理解</div>
<div class="t b k" style="left:458.3px;top:342.1px;font-size:9.8px;letter-spacing:-0.13px;">•</div><div class="t b k" style="left:472.3px;top:342.1px;font-size:9.8px;letter-spacing:-0.13px;">地域広報担当の繋がり/</div>
<div class="t b k" style="left:472.3px;top:354.40000000000003px;font-size:9.8px;letter-spacing:-0.13px;">意見交換</div>
<div class="t b k" style="left:633.7px;top:305.6px;font-size:9.8px;letter-spacing:-0.13px;">•</div><div class="t b k" style="left:648.3px;top:305.6px;font-size:9.8px;letter-spacing:-0.13px;">SNSアカウントの一元管理</div>
<div class="t b k" style="left:633.7px;top:318.0px;font-size:9.8px;letter-spacing:-0.13px;">•</div><div class="t b k" style="left:648.3px;top:318.0px;font-size:9.8px;letter-spacing:-0.13px;">SNS効果の可視化</div>
<div class="t b k" style="left:633.7px;top:330.1px;font-size:9.8px;letter-spacing:-0.13px;">•</div><div class="t b k" style="left:648.3px;top:330.1px;font-size:9.8px;letter-spacing:-0.13px;">マーケティング活動のDX化</div>
<div class="t b k" style="left:806.3px;top:305.6px;font-size:9.8px;letter-spacing:-0.13px;">•</div><div class="t b k" style="left:819.7px;top:305.6px;font-size:9.8px;letter-spacing:-0.13px;">限定事業者の分析情報の収集</div>
<div class="t b k" style="left:806.3px;top:318.0px;font-size:9.8px;letter-spacing:-0.13px;">•</div><div class="t b k" style="left:819.7px;top:318.0px;font-size:9.8px;letter-spacing:-0.13px;">各限定事業者の認知/収益向上</div>
<div class="t b k" style="left:819.7px;top:330.1px;font-size:9.8px;letter-spacing:-0.13px;">サポート</div>
<div class="t b k" style="left:806.3px;top:342.1px;font-size:9.8px;letter-spacing:-0.13px;">•</div><div class="t b k" style="left:819.7px;top:342.1px;font-size:9.8px;letter-spacing:-0.13px;">デジタル技術の活性化/</div>
<div class="t b k" style="left:819.7px;top:354.40000000000003px;font-size:9.8px;letter-spacing:-0.13px;">市内への集客</div>

<!--IMAGES-->
<svg width="0" height="0" style="position:absolute"><defs><filter id="bl1" x="-10%" y="-10%" width="120%" height="120%"><feGaussianBlur stdDeviation="0.7"/></filter><filter id="bl2" x="-10%" y="-10%" width="120%" height="120%"><feGaussianBlur stdDeviation="1.3"/></filter><filter id="bl3" x="-20%" y="-20%" width="140%" height="140%"><feGaussianBlur stdDeviation="2.2"/></filter></defs></svg>
<svg class="abs" style="left:302.8px;top:372.2px;" width="56" height="72.5" viewBox="0 0 56 72.5"><rect width="56" height="72.5" fill="#f3efea"/><g filter="url(#bl1)"><rect x="3" y="9" width="7" height="16" fill="#8ccfd0"/><rect x="0" y="16" width="7" height="9" fill="#dfe86a"/><rect x="2" y="2" width="8" height="5" fill="#f0ee9a"/><rect x="9.5" y="4.5" width="42.5" height="23" rx="3.5" fill="#e0507e" transform="rotate(-3 30 16)"/><rect x="9.5" y="20" width="12" height="8" fill="#f6f4f4"/><circle cx="49.5" cy="5" r="4.6" fill="#f6d23a"/><circle cx="49.5" cy="5.4" r="2" fill="#e07030"/><rect x="2" y="29.5" width="52" height="6.2" fill="#f7dfe6"/><rect x="4" y="30.4" width="48" height="4.4" fill="#e4467c" opacity=".8"/><rect x="14" y="36.4" width="28" height="2.4" fill="#e6608c" opacity=".75"/><rect x="14.5" y="40.5" width="12.5" height="15" rx="1" fill="#2e9fb0"/><rect x="17" y="43" width="6" height="6" fill="#a08a90"/><rect x="28.5" y="40.5" width="25" height="17" rx="1.5" fill="#f5ee6c"/><rect x="30" y="43" width="22" height="12.5" fill="#f6f3d4"/><path d="M32 46 H50 M32 49 H50 M32 52 H50" stroke="#9aa" stroke-width="1"/><rect x="2.5" y="41" width="10" height="13" fill="#dedad6"/><path d="M3 44 H12 M3 47 H12 M3 50 H10" stroke="#999" stroke-width="0.8"/><rect x="3" y="57" width="24" height="13" fill="#cfe9f2"/><path d="M5 61 H24 M6 65 H22" stroke="#6bb6d0" stroke-width="1.4"/><rect x="13" y="67" width="5" height="2" fill="#e05070"/><rect x="29" y="60" width="24.5" height="10.5" fill="#e6dfc8"/><rect x="46.5" y="62" width="5" height="8" fill="#2d2d33"/><circle cx="49" cy="62.6" r="1.6" fill="#d9b8a0"/><text x="14" y="17.5" font-family="Liberation Sans,sans-serif" font-weight="bold" font-size="10.5" fill="#fff">SNS</text><rect x="37" y="8" width="9" height="10" fill="#f8d8e2" opacity=".85"/></g><rect x="0" y="70.8" width="56" height="1.7" fill="#4aa5b8"/></svg>
<svg class="abs" style="left:364.6px;top:372.2px;" width="56.2" height="72.5" viewBox="0 0 56.2 72.5"><rect width="56.2" height="72.5" fill="#fbf4ef"/><g filter="url(#bl1)"><ellipse cx="6" cy="20" rx="5" ry="7" fill="#f2c9cf"/><rect x="3" y="8" width="6" height="7" fill="#5a6f96"/><circle cx="6" cy="5.6" r="2.6" fill="#f0d9b8"/><ellipse cx="50" cy="12" rx="4.6" ry="9" fill="#f3dccb"/><rect x="46" y="15" width="8" height="10" fill="#c9c4c6"/><text x="13" y="16" font-family="Liberation Sans,sans-serif" font-weight="bold" font-size="12.5" fill="#c5cfe2">SNS</text><rect x="18" y="18.5" width="20" height="4" fill="#46506e" opacity=".75"/><rect x="16" y="24" width="24" height="1.6" fill="#e59aa8" opacity=".7"/><rect x="5" y="27.6" width="46" height="1.2" fill="#c9c2be"/><rect x="6" y="31.6" width="40" height="4.6" fill="#ee5a86" opacity=".8"/><rect x="3" y="31" width="5" height="3" fill="#f08aa5"/><path d="M5 39 H44" stroke="#b0aaa8" stroke-width="1"/><path d="M5 43 H14 M5 45.4 H15 M5 47.8 H13 M17 43 H28 M17 45.4 H26 M17 49 H27 M5 53 H9 M5 57 H17 M5 59.6 H16 M5 61.6 H17" stroke="#8e8a8a" stroke-width="1.1"/><rect x="21" y="57" width="4.6" height="4.6" fill="#777"/><rect x="34" y="41" width="18" height="30" rx="2" fill="#fbe7e4"/><rect x="39" y="55" width="11" height="5" fill="#c9d2dc"/><path d="M37 49 H45 M37 65 H44" stroke="#9a8f8f" stroke-width="1"/><rect x="4" y="65.4" width="22" height="5.4" fill="#eec9bf"/><path d="M6 68 H24" stroke="#b89a8a" stroke-width="1.6" stroke-dasharray="2 1"/><rect x="26.6" y="66.6" width="5.6" height="4.4" fill="#2b2b30"/><circle cx="29.4" cy="65.6" r="1.6" fill="#dcb9a0"/><ellipse cx="52.4" cy="36" rx="2.2" ry="5" fill="#e8d9c9"/></g></svg>
<svg class="abs" style="left:465.2px;top:372px;" width="72.8" height="54.4" viewBox="0 0 72.8 54.4"><rect width="72.8" height="54.4" fill="#e9e7e4"/><g filter="url(#bl1)"><rect width="72.8" height="9" fill="#8f8678"/><rect y="0" width="72.8" height="2.2" fill="#b7b4ae"/><rect y="3" width="72.8" height="1.6" fill="#a69b88"/><circle cx="10" cy="1.8" r="0.9" fill="#fff"/><circle cx="37" cy="1.4" r="0.9" fill="#fff"/><circle cx="58" cy="5.6" r="1" fill="#fff"/><circle cx="17" cy="6.6" r="0.9" fill="#fff"/><rect y="9" width="72.8" height="11" fill="#e6e4e2"/><rect x="0" y="9" width="9" height="20" fill="#d4d2d2"/><rect x="10.5" y="8" width="2" height="12" fill="#bdb6ac"/><rect x="0" y="24" width="66" height="19.5" fill="#3b3a3f"/><rect x="7" y="21" width="8" height="10" fill="#4a4a4c"/><rect x="16" y="22" width="8" height="9" fill="#8a7768"/><rect x="24.6" y="22" width="8" height="10" fill="#3a3a3e"/><rect x="35" y="21.4" width="10" height="12" fill="#222"/><rect x="46" y="24" width="8" height="10" fill="#d9d4c8"/><rect x="57" y="23.6" width="8.4" height="14" fill="#5a3630"/><circle cx="10.4" cy="19.0" r="2.6" fill="#2a2422"/><circle cx="10.4" cy="20.200000000000003" r="2" fill="#d9b59c"/><circle cx="19.6" cy="18.599999999999998" r="2.6" fill="#2a2422"/><circle cx="19.6" cy="19.8" r="2" fill="#d9b59c"/><circle cx="28.2" cy="19.0" r="2.6" fill="#2a2422"/><circle cx="28.2" cy="20.200000000000003" r="2" fill="#d9b59c"/><circle cx="39.6" cy="17.799999999999997" r="2.6" fill="#2a2422"/><circle cx="39.6" cy="19.0" r="2" fill="#d9b59c"/><circle cx="49.6" cy="20.4" r="2.6" fill="#2a2422"/><circle cx="49.6" cy="21.6" r="2" fill="#d9b59c"/><circle cx="61.6" cy="20.0" r="2.6" fill="#2a2422"/><circle cx="61.6" cy="21.200000000000003" r="2" fill="#d9b59c"/><rect x="18.1" y="20.2" width="3" height="1.8" fill="#f4f4f4"/><rect x="26.7" y="20.2" width="3" height="1.8" fill="#f4f4f4"/><rect x="0" y="30" width="12" height="13" fill="#27303f"/><circle cx="9.6" cy="30.4" r="3.4" fill="#cfa88c"/><circle cx="9.6" cy="28.2" r="3" fill="#231e1c"/><rect x="13" y="32" width="12" height="11.4" fill="#4a2e2a"/><circle cx="19.6" cy="30.6" r="3" fill="#c9a084"/><circle cx="19.6" cy="28.6" r="2.8" fill="#3a2a22"/><rect x="24" y="33" width="10" height="10.4" fill="#1c1c20"/><circle cx="28.6" cy="31.4" r="2.8" fill="#d4b098"/><rect x="26.4" y="31" width="4.4" height="2.8" rx="1" fill="#f6f6f6"/><circle cx="28.6" cy="29.2" r="2.6" fill="#2a221e"/><rect x="35" y="32" width="12" height="11.4" fill="#e4ded0"/><circle cx="41" cy="31" r="2.8" fill="#d8b49a"/><circle cx="41" cy="29" r="2.8" fill="#30241e"/><rect x="39.6" y="34" width="2" height="9" fill="#222"/><rect x="48.6" y="33" width="11" height="10.4" fill="#5e6670"/><circle cx="54.4" cy="31" r="2.8" fill="#caa48a"/><circle cx="54.4" cy="29.2" r="2.6" fill="#2c2420"/><rect x="59" y="36" width="7" height="7" fill="#c9988a"/><rect y="43.4" width="66" height="11" fill="#dc9433"/><rect y="43.2" width="66" height="1.2" fill="#8a4a20"/><rect x="11.6" y="40" width="3.6" height="12" rx="1" fill="#3f9aa4"/><rect x="1" y="46" width="9" height="6" fill="#e9b45c"/><path d="M34 49 l3 -3 l2 4 l4 -2" stroke="#f0d88a" stroke-width="1.4" fill="none"/><rect x="46" y="50" width="10" height="2" fill="#f2e2c0" transform="rotate(-12 50 51)"/></g></svg>
<svg class="abs" style="left:530.8px;top:388.8px;" width="74.3" height="54.5" viewBox="0 0 74.3 54.5"><rect width="74.3" height="54.5" fill="#d8d0c4"/><g filter="url(#bl1)"><rect width="74.3" height="11" fill="#b9b3a8"/><polygon points="0,0 74.3,0 74.3,4 30,7 0,3" fill="#8f8f92"/><polygon points="0,3 30,7 74.3,4 74.3,9 26,13 0,9" fill="#cfc4ae"/><circle cx="50" cy="1.8" r="1" fill="#fff"/><circle cx="20" cy="3.6" r="0.9" fill="#fff"/><rect x="0" y="9" width="14" height="20" fill="#d0cbc2"/><rect x="14" y="11" width="12" height="22" fill="#e6e2dc"/><rect x="26" y="9" width="14" height="20" fill="#ded6c8"/><rect x="40" y="8" width="9" height="24" fill="#b5a189"/><rect x="49" y="8" width="10" height="24" fill="#e0d6c6"/><rect x="59" y="7" width="8" height="26" fill="#c4b096"/><rect x="67" y="10" width="7.3" height="22" fill="#d9dde4"/><rect x="26.5" y="16" width="11" height="7" fill="#5c5c60"/><rect x="28" y="20" width="9" height="6" fill="#ecebea"/><rect x="0.4" y="15.2" width="13.4" height="7" fill="#1e2430"/><rect x="1.2" y="16" width="11.8" height="5.4" fill="#7d93e0"/><rect x="0" y="22.6" width="10" height="14" fill="#9a8c7c"/><rect x="0" y="30" width="74.3" height="24.5" fill="#7a6a5e" opacity=".55"/><rect x="8.1" y="29" width="9" height="14" rx="2" fill="#3a4250"/><circle cx="12.6" cy="27" r="2.6" fill="#1e1e22"/><rect x="34.4" y="27" width="8" height="10" rx="2" fill="#b8b2a8"/><circle cx="38.4" cy="25" r="2.6" fill="#23252a"/><rect x="43.1" y="27.2" width="7" height="9" rx="2" fill="#6f7884"/><circle cx="46.6" cy="25.2" r="2.6" fill="#4a3c34"/><rect x="53.0" y="29" width="8" height="13" rx="2" fill="#25272c"/><circle cx="57" cy="27" r="2.6" fill="#1b1b1f"/><rect x="64.5" y="28" width="7" height="10" rx="2" fill="#d9d3c8"/><circle cx="68" cy="26" r="2.6" fill="#5a4638"/><rect x="20.5" y="35.6" width="9" height="12" rx="2" fill="#c98a86"/><circle cx="25" cy="33.6" r="2.6" fill="#5e3a30"/><rect x="40.5" y="36.6" width="9" height="12" rx="2" fill="#6a3f3a"/><circle cx="45" cy="34.6" r="2.6" fill="#3a2a26"/><rect x="62.0" y="37.6" width="8" height="14" rx="2" fill="#2a2a2e"/><circle cx="66" cy="35.6" r="2.6" fill="#221e1e"/><rect x="31.5" y="40" width="11" height="14" rx="2" fill="#d9d6d0"/><circle cx="37" cy="38" r="2.6" fill="#8a7a6c"/><rect x="51.5" y="42" width="9" height="12" rx="2" fill="#ddd9d4"/><circle cx="56" cy="40" r="2.6" fill="#20202a"/><rect x="1" y="38" width="14" height="10" fill="#e9d2b4" transform="rotate(-20 8 43)"/><rect x="7" y="46" width="9" height="6.4" fill="#9aa6c8" transform="rotate(-25 11 49)"/><rect x="18" y="46" width="14" height="5" fill="#e8d8b8" transform="rotate(14 25 48)"/><rect x="0" y="44" width="4" height="10" fill="#2a2a2e"/><rect x="0" y="52" width="74.3" height="2.5" fill="#3a302c" opacity=".7"/></g></svg>
<div class="abs" style="left:647px;top:312.7px;width:86px;height:86px;border-radius:50%;background:rgba(198,197,197,0.9);z-index:1;"></div><svg class="abs" style="left:679px;top:339px;z-index:1;" width="30" height="35" viewBox="0 0 30 35"><polygon points="0.4,0.3 29,17.2 0.4,34.3" fill="#fff"/></svg>
<svg class="abs" style="left:628.4px;top:398px;" width="43" height="30" viewBox="0 0 43 30"><rect x="3" y="1" width="30" height="20" rx="1.6" fill="#38383c"/><rect x="4.6" y="2.6" width="26.8" height="16.6" fill="#f7f7f9"/><path d="M8 13.6 V11.6 M10.4 13.6 V10.6 M12.8 13.6 V11 M15.2 13.6 V9.8 M17.6 13.6 V11.2 M20 13.6 V10.2 M22.4 13.6 V11.8 M24.8 13.6 V10.8" stroke="#9fb4d8" stroke-width="0.9"/><path d="M0 22 H36 L34.4 24.2 H1.6 Z" fill="#2e2e32"/><rect x="31.8" y="6.6" width="10.6" height="22.6" rx="2" fill="#303034"/><rect x="32.9" y="8" width="8.4" height="19.6" rx="1" fill="#f7f7f9"/><circle cx="37.6" cy="18" r="1.6" fill="#f4dcc8"/></svg>
<div class="t b" style="left:634.4px;top:431.2px;font-size:8.6px;color:#262626;letter-spacing:0.35px;transform:scaleX(1.12);transform-origin:left;">GENba</div>
<svg class="abs" style="left:681.9px;top:389.2px;z-index:3;" width="95.2" height="49.3" viewBox="0 0 95.2 49.3"><rect width="95.2" height="49.3" fill="#e47f2b"/><g filter="url(#bl1)"><rect x="92.6" width="2.6" height="49.3" fill="#f2d060"/><rect y="0" width="95.2" height="1" fill="#f0cf6a"/><path d="M0 14 C7 11 13 14 17 20 C21 27 22 34 20 49.3 H0 Z" fill="#3f9da3"/><path d="M2 5 H14 M2 8 H12" stroke="#f6b06a" stroke-width="1.2"/><circle cx="19" cy="30" r="0.5" fill="#f6e08a"/><circle cx="21" cy="33" r="0.5" fill="#f6e08a"/><circle cx="20" cy="37" r="0.5" fill="#f6e08a"/><rect x="24" y="3" width="69" height="40.4" fill="#e6e9ec"/><rect x="24" y="3" width="69" height="2.4" fill="#d3d7dc"/><rect x="26" y="7.4" width="65" height="4" fill="#5aa9b9"/><rect x="31" y="14" width="56" height="6.6" fill="#8b969e"/><rect x="52" y="13" width="14" height="2" fill="#f4f4f4"/><rect x="76" y="15" width="9" height="4.6" fill="#f6f6f6"/><rect x="31" y="22.6" width="56" height="11" fill="#a9b4bb"/><rect x="35" y="26" width="9" height="2.4" fill="#f4f4f4"/><rect x="48" y="26" width="9" height="2.4" fill="#f4f4f4"/><rect x="62" y="26" width="9" height="2.4" fill="#f4f4f4"/><rect x="76" y="26" width="8" height="2.4" fill="#f4f4f4"/><rect x="31" y="34.6" width="11" height="3.4" rx="1" fill="#2a2a2e"/><rect x="33" y="38.6" width="52" height="3.4" rx="1.4" fill="#9a9a9c"/><rect x="24" y="43.4" width="69" height="5.9" fill="#d8782a"/><ellipse cx="40" cy="48" rx="9" ry="3" fill="#6aa890"/><ellipse cx="60" cy="48.6" rx="10" ry="2.6" fill="#e9b05a"/><path d="M2 49.3 C2 42 6 39.4 13 39.4 C20 39.4 23.4 42 23.4 49.3 Z" fill="#26262a"/><circle cx="12.8" cy="35.4" r="4.3" fill="#d9b194"/><path d="M8.4 35 C8 30 17.6 30 17.2 35 C16 32.6 10 32.6 8.4 35 Z" fill="#1c1816"/><path d="M9.6 36 H16" stroke="#2a2424" stroke-width="0.8"/></g></svg>
<svg class="abs" style="left:827.2px;top:379.3px;" width="111.4" height="60.4" viewBox="0 0 111.4 60.4"><rect width="111.4" height="60.4" fill="#fdfdfe"/><g filter="url(#bl1)"><rect x="19.6" y="6" width="91" height="54.4" rx="2" fill="#eef1f6"/><rect x="24" y="17" width="83" height="43.4" rx="1.5" fill="#fcfcfd"/><rect x="27" y="25.4" width="14.6" height="25" rx="2" fill="#fdf0df"/><rect x="3" y="2.4" width="9" height="1.8" fill="#3a3a40"/><rect x="84" y="1.6" width="8" height="3" rx="1" fill="#e4ecf6"/><circle cx="97.6" cy="3" r="1.1" fill="#9a9aa0"/><path d="M100 3 H109" stroke="#c4c4c8" stroke-width="0.8"/><path d="M2 9 H10 M2 14 H8 M3 19 H9 M2 24 H11 M5 29 H8 M3 34 H7 M2 39 H10 M2 44 H12 M2 49 H11 M3 54 H13 M3 58.6 H14" stroke="#b9bcc4" stroke-width="0.9"/><rect x="23" y="10" width="5" height="1.4" fill="#444"/><path d="M23.4 14.8 H36" stroke="#e0705a" stroke-width="0.9"/><path d="M38 14.8 H62" stroke="#b0b0b6" stroke-width="0.7"/><rect x="27" y="21.4" width="6" height="1.4" fill="#55555c"/><rect x="27" y="51.8" width="5" height="1.4" fill="#55555c"/><rect x="42" y="22" width="62" height="3.2" fill="#f0f2f5"/><rect x="42" y="54" width="62" height="3.2" fill="#f0f2f5"/><path d="M43 27 H104" stroke="#e3e5ea" stroke-width="0.9" stroke-dasharray="9 3 5 2"/><path d="M29 27 H37" stroke="#e8c9a0" stroke-width="0.8"/><path d="M43 31.6 H104" stroke="#e3e5ea" stroke-width="0.9" stroke-dasharray="9 3 5 2"/><path d="M29 31.6 H37" stroke="#e8c9a0" stroke-width="0.8"/><path d="M43 36.2 H104" stroke="#e3e5ea" stroke-width="0.9" stroke-dasharray="9 3 5 2"/><path d="M29 36.2 H37" stroke="#e8c9a0" stroke-width="0.8"/><path d="M43 40.8 H104" stroke="#e3e5ea" stroke-width="0.9" stroke-dasharray="9 3 5 2"/><path d="M29 40.8 H37" stroke="#e8c9a0" stroke-width="0.8"/><path d="M43 45.4 H104" stroke="#e3e5ea" stroke-width="0.9" stroke-dasharray="9 3 5 2"/><path d="M29 45.4 H37" stroke="#e8c9a0" stroke-width="0.8"/></g><circle cx="107.6" cy="57" r="2.4" fill="#2f9fb0"/><circle cx="107.6" cy="57" r="0.9" fill="#e8f6f8"/></svg>
<svg class="abs" style="left:935.6px;top:340.6px;" width="6" height="13" viewBox="0 0 6 13"><path d="M0.8 0.7 C2 0.7 2.8 1 3 1.8 C3.2 1 4 0.7 5.2 0.7 M3 1.6 V11.4 M0.8 12.3 C2 12.3 2.8 12 3 11.2 C3.2 12 4 12.3 5.2 12.3 M1.8 6.6 H4.2" fill="none" stroke="#111" stroke-width="1"/></svg>
<svg class="abs" style="left:1075.5px;top:134.4px;" width="34" height="34" viewBox="0 0 30 30"><path d="M2.4 16.4 C6.4 16.8 9.6 12.6 12.2 4.2 C12.6 2.8 13.4 2.6 13 4.4 L10.8 13 C10.2 15.4 11.6 16 13.6 14.4" fill="none" stroke="#1e1e22" stroke-width="1.5" stroke-linecap="round"/><path d="M8 8.6 C11 7.8 14 7.2 17.4 6.2" fill="none" stroke="#1e1e22" stroke-width="1.3" stroke-linecap="round"/><ellipse cx="21.2" cy="10.6" rx="3" ry="4.4" transform="rotate(22 21.2 10.6)" fill="none" stroke="#1e1e22" stroke-width="1.6"/><path d="M10 19.6 H17.4 M10 22.6 H15 M10 25.6 H20" stroke="#55555a" stroke-width="1"/></svg>

<!--bars-->
<div class="abs" style="left:284.5px;top:463.8px;width:677.5px;height:27px;box-shadow:0 0 2.5px 0.5px rgba(255,255,255,0.85);background:#d6e8ed;border-radius:4px;"></div>
<div class="abs" style="left:284.5px;top:492.8px;width:677.5px;height:27px;box-shadow:0 0 2.5px 0.5px rgba(255,255,255,0.85);background:#d6e8ed;border-radius:4px;"></div>
<svg class="abs" style="left:568px;top:523px;" width="105" height="12" viewBox="0 0 105 12"><polygon points="0,0 105,0 52.5,11" fill="#d9d9db"/></svg>
<div class="abs" style="left:284.5px;top:539.3px;width:677.5px;height:27px;box-shadow:0 0 2.5px 0.5px rgba(255,255,255,0.85);background:#c9cbd9;border-radius:4px;"></div>
<div class="abs" style="left:284.5px;top:570.3px;width:677.5px;height:27px;box-shadow:0 0 2.5px 0.5px rgba(255,255,255,0.85);background:#c9cbd9;border-radius:4px;"></div>
<svg class="abs" style="left:568px;top:601px;" width="105" height="12" viewBox="0 0 105 12"><polygon points="0,0 105,0 52.5,11" fill="#d9d9db"/></svg>
<div class="abs" style="left:283px;top:613.5px;width:677px;height:27.5px;background:#4a74b9;border-radius:4px;"></div>
<div class="t b k" style="left:284.5px;top:470.5px;width:677.5px;text-align:center;font-size:11.8px;letter-spacing:-0.17px;">デジタルデバイド解消</div>
<div class="t b k" style="left:284.5px;top:499.5px;width:677.5px;text-align:center;font-size:11.8px;letter-spacing:-0.17px;">稼げるSNSアカウント創出＝市内事業者の認知・収益向上</div>
<div class="t b k" style="left:284.5px;top:546px;width:677.5px;text-align:center;font-size:11.8px;letter-spacing:-0.17px;">産品のブランド化／産品の情報発信・販路拡大／観光消費拡大 等への貢献</div>
<div class="t b k" style="left:284.5px;top:577px;width:677.5px;text-align:center;font-size:11.8px;letter-spacing:-0.17px;">天草市内への集客増</div>
<div class="t b" style="left:283px;top:621px;width:677px;text-align:center;font-size:11.8px;color:#fff;letter-spacing:-0.17px;">“稼げるまちづくり”のためのデータ・ノウハウ蓄積</div>
<!--footer-->
<div class="t" style="left:174px;top:650px;font-size:6.8px;color:#8a8a8a;">2024 to Inc .</div>
<div class="t" style="left:590px;top:650px;width:100px;text-align:center;font-size:6.8px;color:#8a8a8a;">CONFIDENTIAL</div>
<div class="t" style="left:1092px;top:647px;font-size:11.5px;color:#7d7d7d;">13</div>

<!--STATUS-->
<div class="abs" style="left:28px;top:687.2px;width:35px;height:1.4px;background:#8c8c8c;border-radius:1px;"></div><div id="status" class="abs" style="left:1px;top:688px;width:1196px;height:18px;background:#333333;border-top:1.8px solid #161616;border-radius:0 0 0 4px;"></div>

<!--STATUSITEMS-->
<div class="t" style="left:20.3px;top:694.0px;font-size:8.6px;color:#d4d4d4;letter-spacing:-0.6px;">スライド</div><div class="t" style="left:58.4px;top:693.6px;font-size:10px;color:#d4d4d4;word-spacing:0.4px;">13 / 20</div><div class="t" style="left:106.3px;top:694.0px;font-size:8.6px;color:#d4d4d4;letter-spacing:-0.35px;">日本語</div><svg class="abs" style="left:147.5px;top:692px;" width="13" height="13" viewBox="0 0 13 13"><circle cx="6.2" cy="2.2" r="1.3" fill="none" stroke="#d4d4d4" stroke-width="0.9"/><path d="M1.4 4.6 L6.2 5.6 L11 4.6 M6.2 5.6 V8 M6.2 8 L3.2 12 M6.2 8 L7.4 9.6" fill="none" stroke="#d4d4d4" stroke-width="0.9" stroke-linecap="round"/><path d="M8.2 9 L12 12.4 M12 9 L8.2 12.4" stroke="#d4d4d4" stroke-width="1"/></svg><div class="t" style="left:163.3px;top:694.0px;font-size:8.6px;color:#d4d4d4;">アクセシビリティ: 検討が必要です</div><svg class="abs" style="left:769.5px;top:693px;" width="11" height="10" viewBox="0 0 11 10"><path d="M0.5 5 H10.5 M0.5 7.4 H10.5 M0.5 9.6 H7" stroke="#d4d4d4" stroke-width="1"/><path d="M3.4 3 L5.5 0.8 L7.6 3" fill="none" stroke="#d4d4d4" stroke-width="1"/></svg><div class="t" style="left:784.6px;top:694.1px;font-size:8.4px;color:#d4d4d4;letter-spacing:0.45px;">ノート</div><svg class="abs" style="left:826.5px;top:692.5px;" width="12" height="11" viewBox="0 0 12 11"><path d="M0.6 0.6 H11.2 V7.6 H5.4 L3 10.2 V7.6 H0.6 Z" fill="#d4d4d4"/></svg><div class="t" style="left:842.6px;top:694.1px;font-size:8.4px;color:#d4d4d4;letter-spacing:0.2px;">コメント</div><div class="abs" style="left:886px;top:689.8px;width:28.5px;height:16.2px;background:#4c4c4c;"></div><svg class="abs" style="left:894px;top:692.5px;" width="12" height="11" viewBox="0 0 12 11"><rect x="0.6" y="0.6" width="10.8" height="9.8" rx="1" fill="#ececec"/><rect x="2" y="2" width="2.4" height="7" fill="#4c4c4c"/><rect x="5.6" y="2" width="4.6" height="3.4" fill="#4c4c4c"/></svg><svg class="abs" style="left:923px;top:693px;" width="12" height="10" viewBox="0 0 12 10"><rect x="0.4" y="0.4" width="4.6" height="3.6" rx="0.6" fill="#d4d4d4"/><rect x="7" y="0.4" width="4.6" height="3.6" rx="0.6" fill="#d4d4d4"/><rect x="0.4" y="6" width="4.6" height="3.6" rx="0.6" fill="#d4d4d4"/><rect x="7" y="6" width="4.6" height="3.6" rx="0.6" fill="#d4d4d4"/></svg><svg class="abs" style="left:952px;top:692.5px;" width="13" height="11" viewBox="0 0 13 11"><path d="M6.5 1.6 V10 M6.5 1.6 C5 0.6 2.6 0.6 0.8 1.2 V9.6 C2.6 9 5 9 6.5 10 C8 9 10.4 9 12.2 9.6 V1.2 C10.4 0.6 8 0.6 6.5 1.6" fill="none" stroke="#d4d4d4" stroke-width="1"/><path d="M2.4 3.2 H5 M2.4 5.2 H5 M8 3.2 H10.6 M8 5.2 H10.6" stroke="#d4d4d4" stroke-width="0.6"/></svg><svg class="abs" style="left:980.5px;top:692.5px;" width="13" height="11" viewBox="0 0 13 11"><path d="M0.4 1 H12.6" stroke="#d4d4d4" stroke-width="1.2"/><rect x="1.6" y="1.4" width="9.8" height="5.6" fill="none" stroke="#d4d4d4" stroke-width="1.1"/><path d="M6.5 7 V9 M4 10.4 H9" stroke="#d4d4d4" stroke-width="1.1"/></svg><div class="abs" style="left:1008px;top:697.6px;width:5.4px;height:1.4px;background:#e4e4e4;"></div><div class="abs" style="left:1020.5px;top:697.4px;width:79px;height:2px;border-radius:1px;background:#6e6e70;"></div><div class="abs" style="left:1055.8px;top:692.4px;width:12px;height:12px;border-radius:50%;background:#b9b9bb;"></div><div class="abs" style="left:1105.8px;top:697.6px;width:5.6px;height:1.4px;background:#e4e4e4;"></div><div class="abs" style="left:1107.9px;top:695.5px;width:1.4px;height:5.6px;background:#e4e4e4;"></div><div class="t" style="left:1126.7px;top:693.7px;font-size:9.2px;color:#d4d4d4;">124%</div><svg class="abs" style="left:1167px;top:693px;" width="11" height="11" viewBox="0 0 11 11"><rect x="0.6" y="0.6" width="9.8" height="9.8" rx="1.2" fill="none" stroke="#d4d4d4" stroke-width="1"/><path d="M2.6 4.2 V2.6 H4.2 M6.8 2.6 H8.4 V4.2 M8.4 6.8 V8.4 H6.8 M4.2 8.4 H2.6 V6.8" fill="none" stroke="#d4d4d4" stroke-width="0.9"/></svg>
<!--VIDEO-->
<div class="abs" style="left:1149px;top:0;width:228px;height:1.4px;background:#dedede;z-index:11;"></div><div class="abs" style="left:1148.4px;top:1px;width:1.6px;height:130px;background:#e6e6e6;z-index:11;"></div>
<div id="video" class="abs" style="left:1148.6px;top:1px;width:228.4px;height:130px;background:#ececec;overflow:hidden;z-index:10;"><svg class="abs" style="left:0;top:0;" width="228" height="130" viewBox="1149 1 228 130">
<defs>
<radialGradient id="skin" cx="0.42" cy="0.42" r="0.75"><stop offset="0" stop-color="#ecbba9"/><stop offset="0.55" stop-color="#dba392"/><stop offset="1" stop-color="#b98474"/></radialGradient>
<linearGradient id="neck" x1="0" y1="0" x2="0" y2="1"><stop offset="0" stop-color="#a87660"/><stop offset="1" stop-color="#c4917a"/></linearGradient>
<linearGradient id="shirt" x1="0" y1="0" x2="1" y2="0"><stop offset="0" stop-color="#dfe3ea"/><stop offset="0.45" stop-color="#e3e2ec"/><stop offset="1" stop-color="#cfcbdd"/></linearGradient>
<filter id="vb" x="-10%" y="-10%" width="120%" height="120%"><feGaussianBlur stdDeviation="0.55"/></filter>
<filter id="vb2" x="-20%" y="-20%" width="140%" height="140%"><feGaussianBlur stdDeviation="1.6"/></filter>
</defs>
<rect x="1149" y="1" width="228" height="130" fill="#ececec"/>
<!-- white ribbon -->
<path d="M1149 64 C1170 52 1190 46 1205 46.6 C1218 47 1228 51 1236 56 L1186 100 L1149 77 Z" fill="#f2f2f3"/>
<path d="M1298 50 C1315 44 1340 42 1372 46 L1377 44 V90 L1298 92 Z" fill="#f1f1f2"/>
<!-- yellow pieces -->
<path d="M1149 76.5 L1184.5 99 L1166 127 L1149 120 Z" fill="#e6f431"/>
<path d="M1213 120 L1224.5 109.6 L1243 111.7 L1226 120 L1206 131 L1203 131 Z" fill="#e6f431"/>
<path d="M1319.6 66 V47.4 A18.4 18.4 0 0 1 1356.4 47.4 V66 Z" fill="#e6f431"/>
<path d="M1292 93 H1346 L1343.8 99.8 L1325.2 119 C1315 116 1302 109 1294.6 101 Z" fill="#e6f431"/>
<!-- pink ribbon -->
<path d="M1176 140 L1247 56 C1262 38 1300 26.5 1338 25.8 C1355 25.6 1368 27 1386 30.5" fill="none" stroke="#ee356f" stroke-width="35.5"/>
<!-- re-draw dome over pink -->
<path d="M1319.6 66 V47.4 A18.4 18.4 0 0 1 1356.4 47.4 V66 Z" fill="#e6f431"/>
<path d="M1300 51 C1310 47 1316 45.6 1320 45 V66 H1300 Z" fill="#f1f1f2"/>
<path d="M1356 44 C1362 44.6 1368 45.6 1372 46.8 L1377 44 V66 H1356 Z" fill="#f1f1f2"/>
<!-- teal ribbon -->
<path d="M1136 51 C1158 36 1180 29 1203 29 C1240 29 1262 54 1300 70 C1316 77 1326 81.6 1337 81.2 C1353 80.4 1367 72 1384 61" fill="none" stroke="#2badb9" stroke-width="36.5"/>
<!-- top-left small logo + text -->
<path d="M1156 18.6 C1158.4 18.8 1159.8 16.6 1161 13 L1160 17 C1159.8 18 1160.6 18.2 1161.4 17.6 M1158.8 15.2 L1163 14.2" fill="none" stroke="#1b1b20" stroke-width="0.8" stroke-linecap="round"/><ellipse cx="1164.6" cy="16" rx="1.3" ry="1.8" transform="rotate(20 1164.6 16)" fill="none" stroke="#1b1b20" stroke-width="0.8"/>
<path d="M1159 20.4 H1163.4 M1159 21.8 H1163" stroke="#234" stroke-width="0.7"/>
<path d="M1169.6 15 H1190 M1169.6 17.6 H1196.6 M1171 20.2 H1189.6" stroke="#1d5560" stroke-width="0.9" stroke-dasharray="3 0.6 5 0.8 2 0.5"/>
<!-- CONNECT text -->
<g font-family="Liberation Sans, sans-serif" font-weight="bold" font-size="8.5" fill="#121a2c" letter-spacing="0.25">
<text x="1327.4" y="99.2">CONNECT</text><text x="1327.4" y="110.6">GOALS &amp;</text><text x="1327.4" y="122">ACTIONS.</text></g>
<!-- small texts left -->
<g font-family="Liberation Sans, sans-serif" font-weight="bold" fill="#1a1a1a"><text x="1158.8" y="96.6" font-size="4.2">株式会社 to</text><text x="1159" y="103.4" font-size="3.4" font-style="italic" font-weight="normal">代表取締役社長</text><text x="1159.2" y="114.4" font-size="9.2">濵野 和城</text></g>
<!-- PERSON -->
<g filter="url(#vb)">
<!-- hair back -->
<path d="M1231.8 76 C1230 50 1238 24.4 1266 23.9 C1292 24 1303.4 45 1302.8 72 C1302.6 80 1301.8 85 1300.6 86 L1296 104 L1289 106 L1244 100 L1237.4 90.4 C1233.5 88 1232 82 1231.8 76 Z" fill="#261c19"/>
<!-- shirt -->
<path d="M1205.5 131 C1212 126 1222 121 1232 116.6 C1240 113.4 1246 110 1251 105 L1270 118 L1289 104 L1294.4 104.4 C1306 109 1318 115 1328 120.6 C1335 124.4 1341 127.6 1345 131 Z" fill="url(#shirt)"/>
<path d="M1294 105 C1297 112 1300 122 1300 131 H1288 L1290 110 Z" fill="#f2f3f7"/>
<path d="M1243 112 C1240 118 1238 124 1238 131 H1230 C1232 124 1236 117 1243 112 Z" fill="#c3cdd8"/>
<path d="M1251 105.4 C1249 110 1248 116 1249 122 L1256 112 Z" fill="#eef0f5"/>
<rect x="1276" y="127.8" width="7" height="3.2" fill="#6f8fc0"/>
<!-- neck -->
<path d="M1251 96 L1250.6 106 C1254 116 1262 125 1268 131 H1289 C1290.6 122 1291 112 1290.8 98 Z" fill="url(#neck)"/>
<path d="M1286 98 L1291 98 L1294.4 104.4 L1288 131 H1283 C1287 120 1288 108 1286 98 Z" fill="#8c604e"/>
<!-- ear -->
<ellipse cx="1296.6" cy="75.4" rx="3.7" ry="9.4" fill="#d39c82"/>
<path d="M1296.4 69 C1298.4 72 1298.4 79 1296.4 82.6" fill="none" stroke="#a9735d" stroke-width="1"/>
<!-- face -->
<path d="M1239.6 60 C1239 84 1245 103 1260 112.6 C1265 115.8 1272 115.6 1277 112 C1290 102 1294.4 85 1293.6 60 C1293 40 1282 34 1266 34 C1250 34 1240 40 1239.6 60 Z" fill="url(#skin)"/>
<!-- hair front -->
<path d="M1231.8 76 C1230 50 1238 24.4 1266 23.9 C1292 24 1303.4 45 1302.8 72 C1302.6 79 1302 84 1300.8 85.6 C1300 80 1299.6 72 1298.6 66 C1296 52 1288 43.6 1270 39.6 C1266 38.8 1263.6 38 1262 37.4 C1258 39.4 1254 42 1251.6 45 C1245 52.4 1242 62 1241 73 C1240.4 80 1239.6 87 1237.6 90.4 C1233.6 88 1232 82 1231.8 76 Z" fill="#261c19"/>
<path d="M1239.4 54 C1241 44 1246 35.4 1253 31" fill="none" stroke="#6e5345" stroke-width="2" stroke-linecap="round" opacity=".8"/>
<path d="M1262 37 C1270 33 1282 34 1289 40" fill="none" stroke="#3a2a24" stroke-width="1.6" opacity=".7"/>
<!-- brows & eyes -->
<path d="M1244 63.4 C1248 61.6 1253 61.6 1257.4 63 M1271.6 62.6 C1275.6 61 1280.6 61.2 1284.4 63" fill="none" stroke="#5a3b30" stroke-width="1.5" stroke-linecap="round" opacity=".85"/>
<path d="M1244.6 67.8 C1248 66.4 1253 66.6 1256.4 68.2 M1272 67.4 C1275.4 66.2 1280 66.2 1282.8 67.6" fill="none" stroke="#2c1c18" stroke-width="1.7" stroke-linecap="round"/>
<!-- nose -->
<path d="M1263.6 70 C1262.8 76 1261 81 1260.4 84.4" fill="none" stroke="#c48d76" stroke-width="1.6"/>
<path d="M1259.6 85.4 C1263 87.4 1268 87.4 1271.6 85.2" fill="none" stroke="#9c6652" stroke-width="1.5" stroke-linecap="round"/>
<ellipse cx="1266.4" cy="78" rx="3" ry="6" fill="#efc3ac" opacity=".7"/>
<!-- mouth -->
<path d="M1257.4 94.6 C1262 92.6 1270 92.4 1275.6 94.2 C1270 96.8 1262 97 1257.4 94.6 Z" fill="#5e2c2a"/>
<path d="M1258.4 96.4 C1263 99.6 1270 99.6 1274.6 96.2 C1270 98 1263 98.2 1258.4 96.4 Z" fill="#c47a72"/>
<path d="M1257.6 93.6 C1262 91.6 1270 91.4 1275.4 93.2" fill="none" stroke="#b87366" stroke-width="1.2"/>
<!-- cheek/jaw shading -->
<path d="M1284 98 C1290 90 1293 80 1293.4 66 C1294 86 1291 102 1278 112 Z" fill="#b07c66" opacity=".55"/>
<path d="M1246 100 C1252 108 1262 114 1270 114.6 C1262 116.4 1252 110 1246 100 Z" fill="#b98670" opacity=".6"/>
</g>
</svg>
<!-- name label -->
<div class="abs" style="left:0;top:107px;width:51.8px;height:23px;background:rgba(0,0,0,0.4);"></div>
<div class="t b" style="left:4px;top:114px;font-size:11.3px;color:#fff;">濵野和城</div>
</div>
</div>
</body>
</html>
